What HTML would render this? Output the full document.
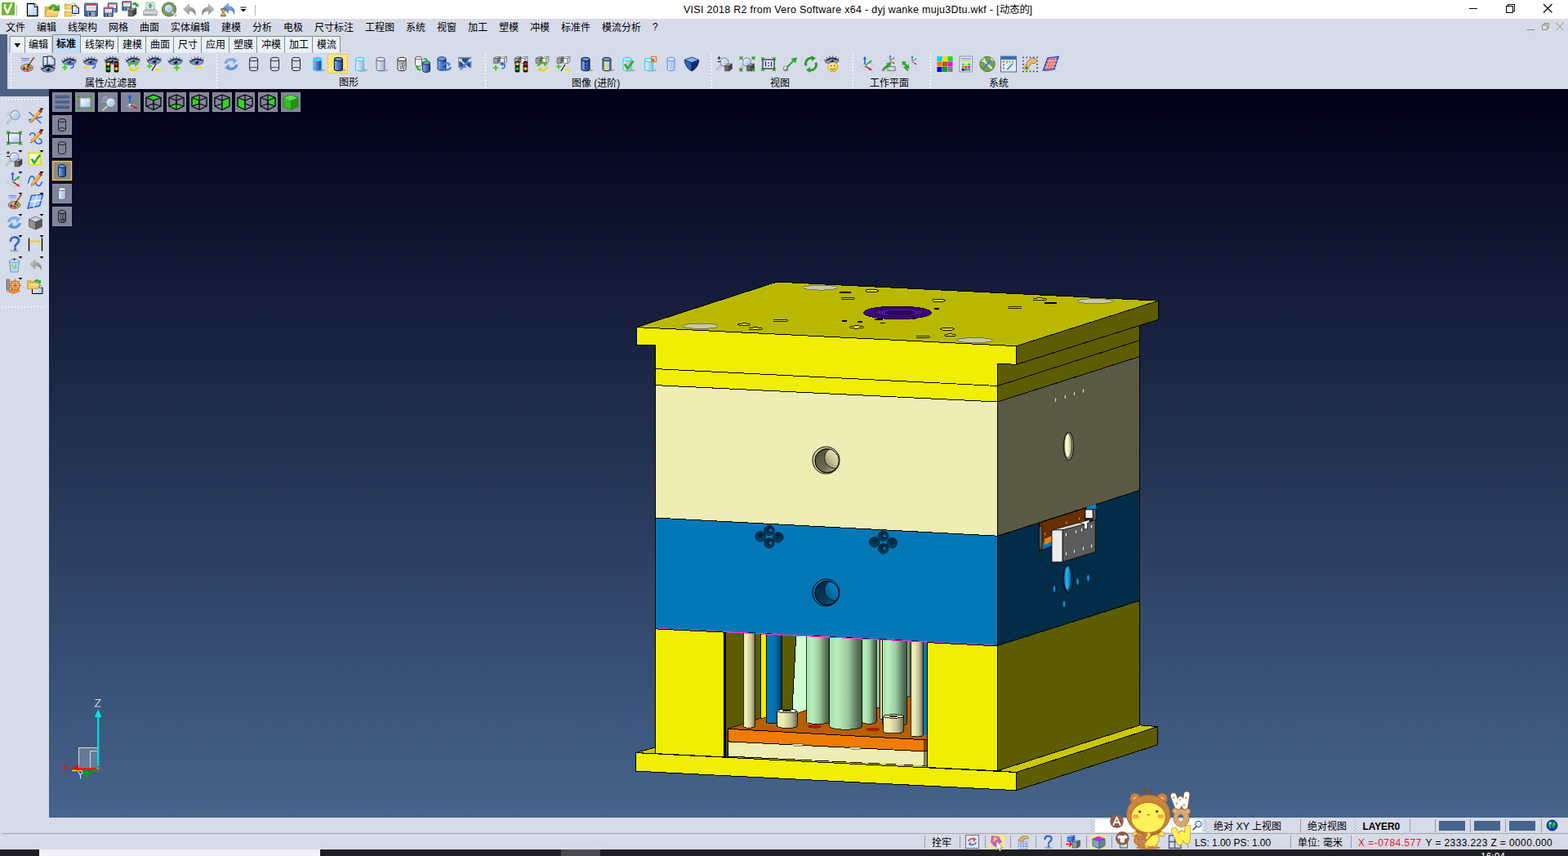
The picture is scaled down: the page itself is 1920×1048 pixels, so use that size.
<!DOCTYPE html>
<html lang="zh"><head><meta charset="utf-8"><title>VISI 2018 R2 from Vero Software x64 - dyj wanke muju3Dtu.wkf</title>
<style>
html,body{margin:0;padding:0;}
body{width:1920px;height:1048px;position:relative;overflow:hidden;background:#d6dbe9;font-family:"Liberation Sans",sans-serif;font-size:12px;}
.t{position:absolute;overflow:visible;display:block;}
.t text{font-family:"Liberation Sans","Noto Sans CJK SC",sans-serif;}
.l{position:absolute;white-space:pre;line-height:1;}
.i{position:absolute;overflow:visible;display:block;}
.abs{position:absolute;}
</style></head><body>
<div style="position:absolute;left:0px;top:0px;width:1920px;height:23px;background:#ffffff;"></div>
<span class="l" style="left:837px;top:5.5px;font-size:12.5px;color:#000;letter-spacing:0.28px;">VISI 2018 R2 from Vero Software x64 - dyj wanke muju3Dtu.wkf - [</span>
<svg class="t" aria-label="动态的" style="left:1224.3px;top:4.7px;" width="38.9" height="16.0" viewBox="0 0 38.9 16.0"><text x="0" y="10.82" font-size="12.3" fill="#000">动态的</text></svg>
<span class="l" style="left:1260.5px;top:5.5px;font-size:12.5px;color:#000;">]</span>
<svg class="i" style="left:1790px;top:0" width="130" height="23" viewBox="0 0 130 23" shape-rendering="crispEdges"><path d="M9 10.5h10" stroke="#000" stroke-width="1" fill="none"/><path d="M54.5 7.5h8v8h-8z M56.5 7.5v-2h8v8h-2" stroke="#000" stroke-width="1" fill="none"/></svg>
<svg class="i" style="left:1889px;top:4px" width="13" height="13" viewBox="0 0 13 13"><path d="M1 1l10.5 10.5M11.5 1L1 11.5" stroke="#000" stroke-width="1.1" fill="none"/></svg>
<div style="position:absolute;left:0px;top:23px;width:1920px;height:20px;background:#d6dbe9;"></div>
<svg class="t" aria-label="文件" style="left:7px;top:26.5px;" width="26.0" height="15.6" viewBox="0 0 26.0 15.6"><text x="0" y="10.56" font-size="12" fill="#000">文件</text></svg>
<svg class="t" aria-label="编辑" style="left:45px;top:26.5px;" width="26.0" height="15.6" viewBox="0 0 26.0 15.6"><text x="0" y="10.56" font-size="12" fill="#000">编辑</text></svg>
<svg class="t" aria-label="线架构" style="left:83px;top:26.5px;" width="38.0" height="15.6" viewBox="0 0 38.0 15.6"><text x="0" y="10.56" font-size="12" fill="#000">线架构</text></svg>
<svg class="t" aria-label="网格" style="left:133px;top:26.5px;" width="26.0" height="15.6" viewBox="0 0 26.0 15.6"><text x="0" y="10.56" font-size="12" fill="#000">网格</text></svg>
<svg class="t" aria-label="曲面" style="left:171px;top:26.5px;" width="26.0" height="15.6" viewBox="0 0 26.0 15.6"><text x="0" y="10.56" font-size="12" fill="#000">曲面</text></svg>
<svg class="t" aria-label="实体编辑" style="left:209px;top:26.5px;" width="50.0" height="15.6" viewBox="0 0 50.0 15.6"><text x="0" y="10.56" font-size="12" fill="#000">实体编辑</text></svg>
<svg class="t" aria-label="建模" style="left:271px;top:26.5px;" width="26.0" height="15.6" viewBox="0 0 26.0 15.6"><text x="0" y="10.56" font-size="12" fill="#000">建模</text></svg>
<svg class="t" aria-label="分析" style="left:309px;top:26.5px;" width="26.0" height="15.6" viewBox="0 0 26.0 15.6"><text x="0" y="10.56" font-size="12" fill="#000">分析</text></svg>
<svg class="t" aria-label="电极" style="left:347px;top:26.5px;" width="26.0" height="15.6" viewBox="0 0 26.0 15.6"><text x="0" y="10.56" font-size="12" fill="#000">电极</text></svg>
<svg class="t" aria-label="尺寸标注" style="left:385px;top:26.5px;" width="50.0" height="15.6" viewBox="0 0 50.0 15.6"><text x="0" y="10.56" font-size="12" fill="#000">尺寸标注</text></svg>
<svg class="t" aria-label="工程图" style="left:447px;top:26.5px;" width="38.0" height="15.6" viewBox="0 0 38.0 15.6"><text x="0" y="10.56" font-size="12" fill="#000">工程图</text></svg>
<svg class="t" aria-label="系统" style="left:497px;top:26.5px;" width="26.0" height="15.6" viewBox="0 0 26.0 15.6"><text x="0" y="10.56" font-size="12" fill="#000">系统</text></svg>
<svg class="t" aria-label="视窗" style="left:535px;top:26.5px;" width="26.0" height="15.6" viewBox="0 0 26.0 15.6"><text x="0" y="10.56" font-size="12" fill="#000">视窗</text></svg>
<svg class="t" aria-label="加工" style="left:573px;top:26.5px;" width="26.0" height="15.6" viewBox="0 0 26.0 15.6"><text x="0" y="10.56" font-size="12" fill="#000">加工</text></svg>
<svg class="t" aria-label="塑模" style="left:611px;top:26.5px;" width="26.0" height="15.6" viewBox="0 0 26.0 15.6"><text x="0" y="10.56" font-size="12" fill="#000">塑模</text></svg>
<svg class="t" aria-label="冲模" style="left:649px;top:26.5px;" width="26.0" height="15.6" viewBox="0 0 26.0 15.6"><text x="0" y="10.56" font-size="12" fill="#000">冲模</text></svg>
<svg class="t" aria-label="标准件" style="left:687px;top:26.5px;" width="38.0" height="15.6" viewBox="0 0 38.0 15.6"><text x="0" y="10.56" font-size="12" fill="#000">标准件</text></svg>
<svg class="t" aria-label="模流分析" style="left:737px;top:26.5px;" width="50.0" height="15.6" viewBox="0 0 50.0 15.6"><text x="0" y="10.56" font-size="12" fill="#000">模流分析</text></svg>
<span class="l" style="left:799px;top:27px;font-size:12px;color:#000;">?</span>
<svg class="i" style="left:1868px;top:26px" width="50" height="14" viewBox="0 0 50 14"><path d="M2 10.5h9" stroke="#918c76" stroke-width="1" fill="none"/><path d="M20.500 4.5h6v6h-6z M22.5 4.500v-2h6v6h-2" stroke="#918c76" stroke-width="1" fill="none"/><path d="M37.500 2l9 9M46.500 2l-9 9" stroke="#918c76" stroke-width="1" fill="none"/></svg>
<div style="position:absolute;left:0px;top:43px;width:1920px;height:66px;background:#d6dbe9;"></div>
<div style="position:absolute;left:0px;top:42px;width:9px;height:76px;background:#4d6082;"></div>
<div style="position:absolute;left:0px;top:109px;width:60px;height:9px;background:#4d6082;"></div>
<svg class="i" style="left:0;top:40px" width="430" height="26" viewBox="0 40 430 26"><path d="M12.0 64.5V44.5H30.5V64.5" fill="#e9f1fc" stroke="#8d8b73" stroke-width="1"/><path d="M30.5 64.5V44.5H64.0V64.5" fill="#e9f1fc" stroke="#8d8b73" stroke-width="1"/><path d="M98.5 64.5V44.5H144.5V64.5" fill="#e9f1fc" stroke="#8d8b73" stroke-width="1"/><path d="M144.5 64.5V44.5H178.5V64.5" fill="#e9f1fc" stroke="#8d8b73" stroke-width="1"/><path d="M178.5 64.5V44.5H212.5V64.5" fill="#e9f1fc" stroke="#8d8b73" stroke-width="1"/><path d="M212.5 64.5V44.5H246.5V64.5" fill="#e9f1fc" stroke="#8d8b73" stroke-width="1"/><path d="M246.5 64.5V44.5H280.5V64.5" fill="#e9f1fc" stroke="#8d8b73" stroke-width="1"/><path d="M280.5 64.5V44.5H314.5V64.5" fill="#e9f1fc" stroke="#8d8b73" stroke-width="1"/><path d="M314.5 64.5V44.5H348.5V64.5" fill="#e9f1fc" stroke="#8d8b73" stroke-width="1"/><path d="M348.5 64.5V44.5H382.5V64.5" fill="#e9f1fc" stroke="#8d8b73" stroke-width="1"/><path d="M382.5 64.5V44.5H416.5V64.5" fill="#e9f1fc" stroke="#8d8b73" stroke-width="1"/><path d="M64.5 64.5V42.5H98.5V64.5" fill="#c4dcf6" stroke="#8d8b73" stroke-width="1"/><path d="M17.500 53h7.500l-3.750 5.200z" fill="#000"/></svg>
<svg class="t" aria-label="编辑" style="left:35.25px;top:47.8px;" width="26.0" height="15.6" viewBox="0 0 26.0 15.6"><text x="0" y="10.56" font-size="12" fill="#000">编辑</text></svg>
<svg class="t" aria-label="标准" style="left:69.45px;top:46.6px;" width="26.0" height="15.6" viewBox="0 0 26.0 15.6"><text x="0" y="10.56" font-size="12" font-weight="bold" fill="#000">标准</text></svg>
<svg class="t" aria-label="线架构" style="left:103.5px;top:47.8px;" width="38.0" height="15.6" viewBox="0 0 38.0 15.6"><text x="0" y="10.56" font-size="12" fill="#000">线架构</text></svg>
<svg class="t" aria-label="建模" style="left:149.5px;top:47.8px;" width="26.0" height="15.6" viewBox="0 0 26.0 15.6"><text x="0" y="10.56" font-size="12" fill="#000">建模</text></svg>
<svg class="t" aria-label="曲面" style="left:183.5px;top:47.8px;" width="26.0" height="15.6" viewBox="0 0 26.0 15.6"><text x="0" y="10.56" font-size="12" fill="#000">曲面</text></svg>
<svg class="t" aria-label="尺寸" style="left:217.5px;top:47.8px;" width="26.0" height="15.6" viewBox="0 0 26.0 15.6"><text x="0" y="10.56" font-size="12" fill="#000">尺寸</text></svg>
<svg class="t" aria-label="应用" style="left:251.5px;top:47.8px;" width="26.0" height="15.6" viewBox="0 0 26.0 15.6"><text x="0" y="10.56" font-size="12" fill="#000">应用</text></svg>
<svg class="t" aria-label="塑膜" style="left:285.5px;top:47.8px;" width="26.0" height="15.6" viewBox="0 0 26.0 15.6"><text x="0" y="10.56" font-size="12" fill="#000">塑膜</text></svg>
<svg class="t" aria-label="冲模" style="left:319.5px;top:47.8px;" width="26.0" height="15.6" viewBox="0 0 26.0 15.6"><text x="0" y="10.56" font-size="12" fill="#000">冲模</text></svg>
<svg class="t" aria-label="加工" style="left:353.5px;top:47.8px;" width="26.0" height="15.6" viewBox="0 0 26.0 15.6"><text x="0" y="10.56" font-size="12" fill="#000">加工</text></svg>
<svg class="t" aria-label="模流" style="left:387.5px;top:47.8px;" width="26.0" height="15.6" viewBox="0 0 26.0 15.6"><text x="0" y="10.56" font-size="12" fill="#000">模流</text></svg>
<svg class="i" style="left:12px;top:66px" width="3" height="41" shape-rendering="crispEdges"><rect x="0" y="0" width="2" height="2" fill="#ffffff"/><rect x="0.0" y="1" width="1" height="1" fill="#b8bdd0"/><rect x="0" y="4" width="2" height="2" fill="#ffffff"/><rect x="0.0" y="5" width="1" height="1" fill="#b8bdd0"/><rect x="0" y="8" width="2" height="2" fill="#ffffff"/><rect x="0.0" y="9" width="1" height="1" fill="#b8bdd0"/><rect x="0" y="12" width="2" height="2" fill="#ffffff"/><rect x="0.0" y="13" width="1" height="1" fill="#b8bdd0"/><rect x="0" y="16" width="2" height="2" fill="#ffffff"/><rect x="0.0" y="17" width="1" height="1" fill="#b8bdd0"/><rect x="0" y="20" width="2" height="2" fill="#ffffff"/><rect x="0.0" y="21" width="1" height="1" fill="#b8bdd0"/><rect x="0" y="24" width="2" height="2" fill="#ffffff"/><rect x="0.0" y="25" width="1" height="1" fill="#b8bdd0"/><rect x="0" y="28" width="2" height="2" fill="#ffffff"/><rect x="0.0" y="29" width="1" height="1" fill="#b8bdd0"/><rect x="0" y="32" width="2" height="2" fill="#ffffff"/><rect x="0.0" y="33" width="1" height="1" fill="#b8bdd0"/><rect x="0" y="36" width="2" height="2" fill="#ffffff"/><rect x="0.0" y="37" width="1" height="1" fill="#b8bdd0"/><rect x="0" y="40" width="2" height="2" fill="#ffffff"/><rect x="0.0" y="41" width="1" height="1" fill="#b8bdd0"/></svg>
<svg class="i" style="left:264px;top:66px" width="3" height="41" shape-rendering="crispEdges"><rect x="0" y="0" width="2" height="2" fill="#ffffff"/><rect x="0.0" y="1" width="1" height="1" fill="#b8bdd0"/><rect x="0" y="4" width="2" height="2" fill="#ffffff"/><rect x="0.0" y="5" width="1" height="1" fill="#b8bdd0"/><rect x="0" y="8" width="2" height="2" fill="#ffffff"/><rect x="0.0" y="9" width="1" height="1" fill="#b8bdd0"/><rect x="0" y="12" width="2" height="2" fill="#ffffff"/><rect x="0.0" y="13" width="1" height="1" fill="#b8bdd0"/><rect x="0" y="16" width="2" height="2" fill="#ffffff"/><rect x="0.0" y="17" width="1" height="1" fill="#b8bdd0"/><rect x="0" y="20" width="2" height="2" fill="#ffffff"/><rect x="0.0" y="21" width="1" height="1" fill="#b8bdd0"/><rect x="0" y="24" width="2" height="2" fill="#ffffff"/><rect x="0.0" y="25" width="1" height="1" fill="#b8bdd0"/><rect x="0" y="28" width="2" height="2" fill="#ffffff"/><rect x="0.0" y="29" width="1" height="1" fill="#b8bdd0"/><rect x="0" y="32" width="2" height="2" fill="#ffffff"/><rect x="0.0" y="33" width="1" height="1" fill="#b8bdd0"/><rect x="0" y="36" width="2" height="2" fill="#ffffff"/><rect x="0.0" y="37" width="1" height="1" fill="#b8bdd0"/><rect x="0" y="40" width="2" height="2" fill="#ffffff"/><rect x="0.0" y="41" width="1" height="1" fill="#b8bdd0"/></svg>
<svg class="i" style="left:593px;top:66px" width="3" height="41" shape-rendering="crispEdges"><rect x="0" y="0" width="2" height="2" fill="#ffffff"/><rect x="0.0" y="1" width="1" height="1" fill="#b8bdd0"/><rect x="0" y="4" width="2" height="2" fill="#ffffff"/><rect x="0.0" y="5" width="1" height="1" fill="#b8bdd0"/><rect x="0" y="8" width="2" height="2" fill="#ffffff"/><rect x="0.0" y="9" width="1" height="1" fill="#b8bdd0"/><rect x="0" y="12" width="2" height="2" fill="#ffffff"/><rect x="0.0" y="13" width="1" height="1" fill="#b8bdd0"/><rect x="0" y="16" width="2" height="2" fill="#ffffff"/><rect x="0.0" y="17" width="1" height="1" fill="#b8bdd0"/><rect x="0" y="20" width="2" height="2" fill="#ffffff"/><rect x="0.0" y="21" width="1" height="1" fill="#b8bdd0"/><rect x="0" y="24" width="2" height="2" fill="#ffffff"/><rect x="0.0" y="25" width="1" height="1" fill="#b8bdd0"/><rect x="0" y="28" width="2" height="2" fill="#ffffff"/><rect x="0.0" y="29" width="1" height="1" fill="#b8bdd0"/><rect x="0" y="32" width="2" height="2" fill="#ffffff"/><rect x="0.0" y="33" width="1" height="1" fill="#b8bdd0"/><rect x="0" y="36" width="2" height="2" fill="#ffffff"/><rect x="0.0" y="37" width="1" height="1" fill="#b8bdd0"/><rect x="0" y="40" width="2" height="2" fill="#ffffff"/><rect x="0.0" y="41" width="1" height="1" fill="#b8bdd0"/></svg>
<svg class="i" style="left:870px;top:66px" width="3" height="41" shape-rendering="crispEdges"><rect x="0" y="0" width="2" height="2" fill="#ffffff"/><rect x="0.0" y="1" width="1" height="1" fill="#b8bdd0"/><rect x="0" y="4" width="2" height="2" fill="#ffffff"/><rect x="0.0" y="5" width="1" height="1" fill="#b8bdd0"/><rect x="0" y="8" width="2" height="2" fill="#ffffff"/><rect x="0.0" y="9" width="1" height="1" fill="#b8bdd0"/><rect x="0" y="12" width="2" height="2" fill="#ffffff"/><rect x="0.0" y="13" width="1" height="1" fill="#b8bdd0"/><rect x="0" y="16" width="2" height="2" fill="#ffffff"/><rect x="0.0" y="17" width="1" height="1" fill="#b8bdd0"/><rect x="0" y="20" width="2" height="2" fill="#ffffff"/><rect x="0.0" y="21" width="1" height="1" fill="#b8bdd0"/><rect x="0" y="24" width="2" height="2" fill="#ffffff"/><rect x="0.0" y="25" width="1" height="1" fill="#b8bdd0"/><rect x="0" y="28" width="2" height="2" fill="#ffffff"/><rect x="0.0" y="29" width="1" height="1" fill="#b8bdd0"/><rect x="0" y="32" width="2" height="2" fill="#ffffff"/><rect x="0.0" y="33" width="1" height="1" fill="#b8bdd0"/><rect x="0" y="36" width="2" height="2" fill="#ffffff"/><rect x="0.0" y="37" width="1" height="1" fill="#b8bdd0"/><rect x="0" y="40" width="2" height="2" fill="#ffffff"/><rect x="0.0" y="41" width="1" height="1" fill="#b8bdd0"/></svg>
<svg class="i" style="left:1043px;top:66px" width="3" height="41" shape-rendering="crispEdges"><rect x="0" y="0" width="2" height="2" fill="#ffffff"/><rect x="0.0" y="1" width="1" height="1" fill="#b8bdd0"/><rect x="0" y="4" width="2" height="2" fill="#ffffff"/><rect x="0.0" y="5" width="1" height="1" fill="#b8bdd0"/><rect x="0" y="8" width="2" height="2" fill="#ffffff"/><rect x="0.0" y="9" width="1" height="1" fill="#b8bdd0"/><rect x="0" y="12" width="2" height="2" fill="#ffffff"/><rect x="0.0" y="13" width="1" height="1" fill="#b8bdd0"/><rect x="0" y="16" width="2" height="2" fill="#ffffff"/><rect x="0.0" y="17" width="1" height="1" fill="#b8bdd0"/><rect x="0" y="20" width="2" height="2" fill="#ffffff"/><rect x="0.0" y="21" width="1" height="1" fill="#b8bdd0"/><rect x="0" y="24" width="2" height="2" fill="#ffffff"/><rect x="0.0" y="25" width="1" height="1" fill="#b8bdd0"/><rect x="0" y="28" width="2" height="2" fill="#ffffff"/><rect x="0.0" y="29" width="1" height="1" fill="#b8bdd0"/><rect x="0" y="32" width="2" height="2" fill="#ffffff"/><rect x="0.0" y="33" width="1" height="1" fill="#b8bdd0"/><rect x="0" y="36" width="2" height="2" fill="#ffffff"/><rect x="0.0" y="37" width="1" height="1" fill="#b8bdd0"/><rect x="0" y="40" width="2" height="2" fill="#ffffff"/><rect x="0.0" y="41" width="1" height="1" fill="#b8bdd0"/></svg>
<svg class="i" style="left:1138px;top:66px" width="3" height="41" shape-rendering="crispEdges"><rect x="0" y="0" width="2" height="2" fill="#ffffff"/><rect x="0.0" y="1" width="1" height="1" fill="#b8bdd0"/><rect x="0" y="4" width="2" height="2" fill="#ffffff"/><rect x="0.0" y="5" width="1" height="1" fill="#b8bdd0"/><rect x="0" y="8" width="2" height="2" fill="#ffffff"/><rect x="0.0" y="9" width="1" height="1" fill="#b8bdd0"/><rect x="0" y="12" width="2" height="2" fill="#ffffff"/><rect x="0.0" y="13" width="1" height="1" fill="#b8bdd0"/><rect x="0" y="16" width="2" height="2" fill="#ffffff"/><rect x="0.0" y="17" width="1" height="1" fill="#b8bdd0"/><rect x="0" y="20" width="2" height="2" fill="#ffffff"/><rect x="0.0" y="21" width="1" height="1" fill="#b8bdd0"/><rect x="0" y="24" width="2" height="2" fill="#ffffff"/><rect x="0.0" y="25" width="1" height="1" fill="#b8bdd0"/><rect x="0" y="28" width="2" height="2" fill="#ffffff"/><rect x="0.0" y="29" width="1" height="1" fill="#b8bdd0"/><rect x="0" y="32" width="2" height="2" fill="#ffffff"/><rect x="0.0" y="33" width="1" height="1" fill="#b8bdd0"/><rect x="0" y="36" width="2" height="2" fill="#ffffff"/><rect x="0.0" y="37" width="1" height="1" fill="#b8bdd0"/><rect x="0" y="40" width="2" height="2" fill="#ffffff"/><rect x="0.0" y="41" width="1" height="1" fill="#b8bdd0"/></svg>
<svg class="t" aria-label="属性/过滤器" style="left:104px;top:94.5px;" width="66.7" height="15.6" viewBox="0 0 66.7 15.6"><text x="0" y="10.56" font-size="12" fill="#000">属性/过滤器</text></svg>
<svg class="t" aria-label="图形" style="left:414.5px;top:94.2px;" width="26.0" height="15.6" viewBox="0 0 26.0 15.6"><text x="0" y="10.56" font-size="12" fill="#000">图形</text></svg>
<svg class="t" aria-label="图像 (进阶)" style="left:700px;top:94.5px;" width="61.7" height="15.6" viewBox="0 0 61.7 15.6"><text x="0" y="10.56" font-size="12" fill="#000">图像 (进阶)</text></svg>
<svg class="t" aria-label="视图" style="left:943px;top:94.5px;" width="26.0" height="15.6" viewBox="0 0 26.0 15.6"><text x="0" y="10.56" font-size="12" fill="#000">视图</text></svg>
<svg class="t" aria-label="工作平面" style="left:1064.5px;top:94.5px;" width="50.0" height="15.6" viewBox="0 0 50.0 15.6"><text x="0" y="10.56" font-size="12" fill="#000">工作平面</text></svg>
<svg class="t" aria-label="系统" style="left:1211px;top:94.5px;" width="26.0" height="15.6" viewBox="0 0 26.0 15.6"><text x="0" y="10.56" font-size="12" fill="#000">系统</text></svg>
<div style="position:absolute;left:0px;top:118px;width:60px;height:883px;background:#d6dbe9;"></div>
<svg class="i" style="left:2px;top:121px" width="56" height="3" shape-rendering="crispEdges"><rect x="0" y="0" width="2" height="2" fill="#ffffff"/><rect x="1" y="1" width="1" height="1" fill="#b8bdd0"/><rect x="4" y="0" width="2" height="2" fill="#ffffff"/><rect x="5" y="1" width="1" height="1" fill="#b8bdd0"/><rect x="8" y="0" width="2" height="2" fill="#ffffff"/><rect x="9" y="1" width="1" height="1" fill="#b8bdd0"/><rect x="12" y="0" width="2" height="2" fill="#ffffff"/><rect x="13" y="1" width="1" height="1" fill="#b8bdd0"/><rect x="16" y="0" width="2" height="2" fill="#ffffff"/><rect x="17" y="1" width="1" height="1" fill="#b8bdd0"/><rect x="20" y="0" width="2" height="2" fill="#ffffff"/><rect x="21" y="1" width="1" height="1" fill="#b8bdd0"/><rect x="24" y="0" width="2" height="2" fill="#ffffff"/><rect x="25" y="1" width="1" height="1" fill="#b8bdd0"/><rect x="28" y="0" width="2" height="2" fill="#ffffff"/><rect x="29" y="1" width="1" height="1" fill="#b8bdd0"/><rect x="32" y="0" width="2" height="2" fill="#ffffff"/><rect x="33" y="1" width="1" height="1" fill="#b8bdd0"/><rect x="36" y="0" width="2" height="2" fill="#ffffff"/><rect x="37" y="1" width="1" height="1" fill="#b8bdd0"/><rect x="40" y="0" width="2" height="2" fill="#ffffff"/><rect x="41" y="1" width="1" height="1" fill="#b8bdd0"/><rect x="44" y="0" width="2" height="2" fill="#ffffff"/><rect x="45" y="1" width="1" height="1" fill="#b8bdd0"/><rect x="48" y="0" width="2" height="2" fill="#ffffff"/><rect x="49" y="1" width="1" height="1" fill="#b8bdd0"/><rect x="52" y="0" width="2" height="2" fill="#ffffff"/><rect x="53" y="1" width="1" height="1" fill="#b8bdd0"/></svg>
<svg class="i" style="left:2px;top:375px" width="56" height="3" shape-rendering="crispEdges"><rect x="0" y="0" width="2" height="2" fill="#ffffff"/><rect x="1" y="1" width="1" height="1" fill="#b8bdd0"/><rect x="4" y="0" width="2" height="2" fill="#ffffff"/><rect x="5" y="1" width="1" height="1" fill="#b8bdd0"/><rect x="8" y="0" width="2" height="2" fill="#ffffff"/><rect x="9" y="1" width="1" height="1" fill="#b8bdd0"/><rect x="12" y="0" width="2" height="2" fill="#ffffff"/><rect x="13" y="1" width="1" height="1" fill="#b8bdd0"/><rect x="16" y="0" width="2" height="2" fill="#ffffff"/><rect x="17" y="1" width="1" height="1" fill="#b8bdd0"/><rect x="20" y="0" width="2" height="2" fill="#ffffff"/><rect x="21" y="1" width="1" height="1" fill="#b8bdd0"/><rect x="24" y="0" width="2" height="2" fill="#ffffff"/><rect x="25" y="1" width="1" height="1" fill="#b8bdd0"/><rect x="28" y="0" width="2" height="2" fill="#ffffff"/><rect x="29" y="1" width="1" height="1" fill="#b8bdd0"/><rect x="32" y="0" width="2" height="2" fill="#ffffff"/><rect x="33" y="1" width="1" height="1" fill="#b8bdd0"/><rect x="36" y="0" width="2" height="2" fill="#ffffff"/><rect x="37" y="1" width="1" height="1" fill="#b8bdd0"/><rect x="40" y="0" width="2" height="2" fill="#ffffff"/><rect x="41" y="1" width="1" height="1" fill="#b8bdd0"/><rect x="44" y="0" width="2" height="2" fill="#ffffff"/><rect x="45" y="1" width="1" height="1" fill="#b8bdd0"/><rect x="48" y="0" width="2" height="2" fill="#ffffff"/><rect x="49" y="1" width="1" height="1" fill="#b8bdd0"/><rect x="52" y="0" width="2" height="2" fill="#ffffff"/><rect x="53" y="1" width="1" height="1" fill="#b8bdd0"/></svg>
<div style="position:absolute;left:60px;top:109px;width:1860px;height:892px;background:linear-gradient(#000018,#46648c);"></div>
<div style="position:absolute;left:0px;top:1001px;width:1920px;height:39px;background:#d6dbe9;"></div>
<div style="position:absolute;left:2px;top:1020px;width:1918px;height:1px;background:#a6a6a6;"></div>
<div style="position:absolute;left:0px;top:1040px;width:1920px;height:8px;background:#1f1f1f;"></div>
<div style="position:absolute;left:48px;top:1040px;width:344px;height:8px;background:#f2f2f2;"></div>
<div style="position:absolute;left:687px;top:1040px;width:48px;height:8px;background:#4a4a4a;"></div>
<span class="l" style="left:1813px;top:1043px;font-size:12px;color:#fff;">16:04</span>
<svg class="i" style="left:0;top:0" width="1920" height="109" viewBox="0 0 1920 109"><defs><linearGradient id="gdoc" x1="0" y1="0" x2="1" y2="1"><stop offset="0" stop-color="#ffffff"/><stop offset="1" stop-color="#a8c4f4"/></linearGradient><linearGradient id="gfold" x1="0" y1="0" x2="0" y2="1"><stop offset="0" stop-color="#fbe49a"/><stop offset="1" stop-color="#f2c04c"/></linearGradient><linearGradient id="gflop" x1="0" y1="0" x2="0" y2="1"><stop offset="0" stop-color="#5a7cc0"/><stop offset="1" stop-color="#3a5898"/></linearGradient><linearGradient id="gcb" x1="0" y1="0" x2="1" y2="0"><stop offset="0" stop-color="#8fb4ec"/><stop offset="0.35" stop-color="#5a88d8"/><stop offset="1" stop-color="#1c3888"/></linearGradient><linearGradient id="gcl" x1="0" y1="0" x2="1" y2="0"><stop offset="0" stop-color="#e8eefc"/><stop offset="0.5" stop-color="#c4d2ee"/><stop offset="1" stop-color="#a0b0d4"/></linearGradient><linearGradient id="ggray" x1="0" y1="0" x2="1" y2="1"><stop offset="0" stop-color="#d8d8d8"/><stop offset="1" stop-color="#707070"/></linearGradient><radialGradient id="giris" cx="0.5" cy="0.5" r="0.5"><stop offset="0" stop-color="#0a1430"/><stop offset="0.35" stop-color="#1c3470"/><stop offset="1" stop-color="#7c98cc"/></radialGradient><radialGradient id="gball" cx="0.35" cy="0.3" r="0.8"><stop offset="0" stop-color="#ffffff"/><stop offset="0.5" stop-color="#b0b0b0"/><stop offset="1" stop-color="#505050"/></radialGradient><radialGradient id="gsmile" cx="0.4" cy="0.35" r="0.8"><stop offset="0" stop-color="#fff8a0"/><stop offset="0.6" stop-color="#ffd840"/><stop offset="1" stop-color="#d89000"/></radialGradient><linearGradient id="glens" x1="0" y1="0" x2="1" y2="1"><stop offset="0" stop-color="#f4faff"/><stop offset="1" stop-color="#8cb4e8"/></linearGradient><linearGradient id="ggreen" x1="0" y1="0" x2="0" y2="1"><stop offset="0" stop-color="#58d040"/><stop offset="1" stop-color="#1c8c1c"/></linearGradient><linearGradient id="gbluearrow" x1="0" y1="0" x2="0" y2="1"><stop offset="0" stop-color="#8cbcf0"/><stop offset="1" stop-color="#3c74c0"/></linearGradient><linearGradient id="ggem" x1="0" y1="0" x2="1" y2="1"><stop offset="0" stop-color="#6c9cf0"/><stop offset="1" stop-color="#0c2060"/></linearGradient></defs><rect x="2" y="3" width="16" height="15.600" fill="#6cb42c"/><path d="M5.500 8.500l3.600 7.500l4.800-10.500" fill="none" stroke="#fff" stroke-width="2.600" stroke-linejoin="round" stroke-linecap="round"/><circle cx="6.200" cy="6.200" r="1.300" fill="#fff"/><rect x="20" y="6" width="1" height="13" fill="#b4b4b4"/><path d="M33.5 4.5h8.5l4.0 4.0v11.0h-12.5z" fill="url(#gdoc)" stroke="#000" stroke-width="1.3"/><path d="M42.0 4.5v4.0h4.0" fill="#fff" stroke="#000" stroke-width="0.9099999999999999"/><g transform="translate(55,5.5) scale(1.0)"><path d="M0 3h5l1.500 1.500h8.500v10h-15z" fill="#e8b840" stroke="#b08820" stroke-width="0.500"/><path d="M0 15l2.500-8.500h15l-2.500 8.500z" fill="url(#gfold)" stroke="#b88c24" stroke-width="0.500"/></g><path d="M60 10c1-5 7-6 10-2l2.500-2v7h-7l2.500-2.400c-2-2.500-5-2-6 1z" fill="url(#ggreen)" stroke="#187818" stroke-width="0.500"/><g transform="translate(79,3) scale(0.55)"><path d="M0 3h5l1.500 1.500h8.500v10h-15z" fill="#e8b840" stroke="#b08820" stroke-width="0.500"/><path d="M0 15l2.500-8.500h15l-2.500 8.500z" fill="url(#gfold)" stroke="#b88c24" stroke-width="0.500"/></g><g transform="translate(79,12) scale(0.55)"><path d="M0 3h5l1.500 1.500h8.500v10h-15z" fill="#e8b840" stroke="#b08820" stroke-width="0.500"/><path d="M0 15l2.500-8.500h15l-2.500 8.500z" fill="url(#gfold)" stroke="#b88c24" stroke-width="0.500"/></g><path d="M87 4h5v15h-5" fill="none" stroke="#58c858" stroke-width="0.900"/><path d="M88.5 7h5.4399999999999995l2.56 2.56v6.9399999999999995h-8z" fill="url(#gdoc)" stroke="#000" stroke-width="0.9"/><path d="M93.94 7v2.56h2.56" fill="#fff" stroke="#000" stroke-width="0.63"/><g transform="translate(103.5,4) scale(1.0)"><rect x="0" y="0" width="16" height="16" rx="1.200" fill="url(#gflop)" stroke="#2c4480" stroke-width="0.800"/><rect x="2.200" y="1" width="11.600" height="8" fill="#f8f8f8"/><rect x="2.200" y="1" width="11.600" height="1.800" fill="#e03828"/><path d="M3.500 4.500h9M3.500 6h9M3.500 7.500h9" stroke="#b8b8b8" stroke-width="0.600"/><rect x="4" y="10.500" width="9" height="5.500" fill="#a0a4b0"/><rect x="5.500" y="11.200" width="2.200" height="4" fill="#20305c"/></g><g transform="translate(132,3.5) scale(0.72)"><rect x="0" y="0" width="16" height="16" rx="1.200" fill="url(#gflop)" stroke="#2c4480" stroke-width="0.800"/><rect x="2.200" y="1" width="11.600" height="8" fill="#f8f8f8"/><rect x="2.200" y="1" width="11.600" height="1.800" fill="#e03828"/><path d="M3.500 4.500h9M3.500 6h9M3.500 7.500h9" stroke="#b8b8b8" stroke-width="0.600"/><rect x="4" y="10.500" width="9" height="5.500" fill="#a0a4b0"/><rect x="5.500" y="11.200" width="2.200" height="4" fill="#20305c"/></g><g transform="translate(127,9) scale(0.72)"><rect x="0" y="0" width="16" height="16" rx="1.200" fill="url(#gflop)" stroke="#2c4480" stroke-width="0.800"/><rect x="2.200" y="1" width="11.600" height="8" fill="#f8f8f8"/><rect x="2.200" y="1" width="11.600" height="1.800" fill="#e03828"/><path d="M3.500 4.500h9M3.500 6h9M3.500 7.500h9" stroke="#b8b8b8" stroke-width="0.600"/><rect x="4" y="10.500" width="9" height="5.500" fill="#a0a4b0"/><rect x="5.500" y="11.200" width="2.200" height="4" fill="#20305c"/></g><g transform="translate(149.5,1.5) scale(0.72)"><rect x="0" y="0" width="16" height="16" rx="1.200" fill="url(#gflop)" stroke="#2c4480" stroke-width="0.800"/><rect x="2.200" y="1" width="11.600" height="8" fill="#f8f8f8"/><rect x="2.200" y="1" width="11.600" height="1.800" fill="#e03828"/><path d="M3.500 4.500h9M3.500 6h9M3.500 7.500h9" stroke="#b8b8b8" stroke-width="0.600"/><rect x="4" y="10.500" width="9" height="5.500" fill="#a0a4b0"/><rect x="5.500" y="11.200" width="2.200" height="4" fill="#20305c"/></g><g transform="translate(157,10) scale(1.0)"><path d="M0 3l4-3h6l-4 3z" fill="#a8a8a8" stroke="#303030" stroke-width="0.500"/><path d="M0 3h6v7h-6z" fill="#686868" stroke="#303030" stroke-width="0.500"/><path d="M6 3l4-3v7l-4 3z" fill="#404040" stroke="#303030" stroke-width="0.500"/></g><path d="M162 5c1-3 5-3 6 0l1.500-1v4.500h-4.500l1.500-1.500c-1-1.500-2.500-1.500-3 0z" fill="#30b030"/><path d="M177 13l2.500-5h9l2.500 5z" fill="#e8e8e8" stroke="#909090" stroke-width="0.500"/><rect x="175.500" y="13" width="17" height="5.500" rx="1" fill="#d8d8d8" stroke="#888" stroke-width="0.600"/><rect x="175.500" y="17" width="17" height="2.500" fill="#a8a8a8"/><rect x="179" y="3" width="10" height="8.500" fill="#d8e8f8" stroke="#7890b0" stroke-width="0.600"/><path d="M184 4l3.200 3.500h-2v2.500h-2.400v-2.500h-2z" fill="#30c030"/><circle cx="207" cy="11.500" r="8.600" fill="#78a048" stroke="#587830" stroke-width="1"/><g transform="translate(197.500,2)"><path d="M12.5 12.0l5 5" stroke="#a0a0a0" stroke-width="2.600" stroke-linecap="round"/><path d="M12.5 12.0l5 5" stroke="#e0e0e0" stroke-width="1.200" stroke-linecap="round"/><circle cx="9" cy="8.5" r="5" fill="url(#glens)" stroke="#8898b0" stroke-width="1.300"/><circle cx="9" cy="8.5" r="3.8" fill="none" stroke="#ffffff" stroke-width="0.600" opacity="0.8"/></g><g transform="translate(223.5,4) scale(1.05)"><path d="M1 7l6.500-6v3.500c5 0 8.500 3.500 7.500 9.500c-1-3.500-3.500-5-7.500-5v4z" fill="url(#ggray)" stroke="#9a9a9a" stroke-width="0.600"/></g><g transform="translate(263.3,4) scale(-1.05,1.05)"><path d="M1 7l6.500-6v3.500c5 0 8.500 3.500 7.500 9.500c-1-3.500-3.500-5-7.500-5v4z" fill="url(#ggray)" stroke="#9a9a9a" stroke-width="0.600"/></g><g transform="translate(272,3) scale(1.0)"><path d="M1 7l6.500-6v3.500c5 0 8.500 3.500 7.500 9.500c-1-3.500-3.500-5-7.500-5v4z" fill="url(#gbluearrow)" stroke="#4878c0" stroke-width="0.600"/></g><path d="M270.500 11h6l-2.200 4.200l2.200 4.300h-6l2.200-4.300z" fill="#c8b070" stroke="#705820" stroke-width="0.700"/><rect x="270" y="10.500" width="7" height="1.200" fill="#806828"/><rect x="270" y="19" width="7" height="1.200" fill="#806828"/><rect x="294.500" y="8.500" width="7" height="1" fill="#000"/><path d="M294.500 11h7l-3.500 3.500z" fill="#000"/><rect x="312" y="6" width="1" height="13" fill="#b4b4b4"/><g transform="translate(23.00,68.50) scale(1.0)"><path d="M2 2.500h10l2 1.500h-10z" fill="#7088e0"/><path d="M2 5h10l2 1.500h-10z" fill="#98a8e8"/><path d="M2 7.500h10l2 1.500h-10z" fill="#c0c8f0"/><ellipse cx="10" cy="14.500" rx="7.500" ry="4.500" fill="#c89870" stroke="#705038" stroke-width="0.700"/><circle cx="6.500" cy="15.500" r="1.600" fill="#1830d0"/><circle cx="10.500" cy="16.500" r="1.600" fill="#e02020"/><circle cx="14" cy="14.500" r="1.600" fill="#20b030"/><circle cx="9" cy="12.500" r="1.200" fill="#f0e020"/><path d="M18.500 2l-6.500 9.500" stroke="#a05020" stroke-width="1.600" stroke-linecap="round"/><path d="M12.500 10.500l-1.500 3" stroke="#503018" stroke-width="1.800" stroke-linecap="round"/></g><g transform="translate(49.00,68.50) scale(1.0)"><path d="M4 1h6.12l2.88 2.88v8.120000000000001h-9z" fill="url(#gdoc)" stroke="#000" stroke-width="0.9"/><path d="M10.120000000000001 1v2.88h2.88" fill="#fff" stroke="#000" stroke-width="0.63"/><path d="M9 0.5h6.12l2.88 2.88v8.120000000000001h-9z" fill="url(#gdoc)" stroke="#000" stroke-width="0.9"/><path d="M15.120000000000001 0.5v2.88h2.88" fill="#fff" stroke="#000" stroke-width="0.63"/><g transform="translate(0,9)"><path d="M0.500 8.500C4 2 15 1 19.500 7C15.500 4.500 5 5 0.500 8.500Z" fill="#1c2238"/><path d="M2 8.500C6 4 14 4 18 8C14 11.800 6 11.800 2 8.500Z" fill="#8c9cc4" stroke="#2c3454" stroke-width="0.600"/><circle cx="10" cy="7.800" r="3.300" fill="url(#giris)"/><circle cx="10" cy="7.800" r="1.500" fill="#060a1c"/><circle cx="9" cy="6.600" r="0.800" fill="#fff" opacity="0.85"/><path d="M1.800 6.300l-1.500-1.600M4.300 4.300l-1-2M7.500 3.200l-0.400-2.200M11 3l0.300-2.200M14.200 3.600l1.100-2M16.800 5l1.700-1.500" stroke="#1c2238" stroke-width="0.800"/></g></g><g transform="translate(75.00,68.50) scale(1.0)"><g transform="translate(0,0)"><path d="M0.500 8.500C4 2 15 1 19.500 7C15.500 4.500 5 5 0.500 8.500Z" fill="#1c2238"/><path d="M2 8.500C6 4 14 4 18 8C14 11.800 6 11.800 2 8.500Z" fill="#8c9cc4" stroke="#2c3454" stroke-width="0.600"/><circle cx="10" cy="7.800" r="3.300" fill="url(#giris)"/><circle cx="10" cy="7.800" r="1.500" fill="#060a1c"/><circle cx="9" cy="6.600" r="0.800" fill="#fff" opacity="0.85"/><path d="M1.800 6.300l-1.500-1.600M4.300 4.300l-1-2M7.500 3.200l-0.400-2.200M11 3l0.300-2.200M14.200 3.600l1.100-2M16.800 5l1.700-1.500" stroke="#1c2238" stroke-width="0.800"/></g><path d="M1.2999999999999998 14h6.4M4.5 10.8v6.4" stroke="#48d020" stroke-width="2"/><path d="M11.5 15c4 0 5-5 1.500-6l-2 0m1.800-2.200l-2.600 2.400l2.800 2" fill="none" stroke="#2c6cd0" stroke-width="1.500"/></g><g transform="translate(101.00,68.50) scale(1.0)"><g transform="translate(0,0)"><path d="M0.500 8.500C4 2 15 1 19.500 7C15.500 4.500 5 5 0.500 8.500Z" fill="#1c2238"/><path d="M2 8.500C6 4 14 4 18 8C14 11.800 6 11.800 2 8.500Z" fill="#8c9cc4" stroke="#2c3454" stroke-width="0.600"/><circle cx="10" cy="7.800" r="3.300" fill="url(#giris)"/><circle cx="10" cy="7.800" r="1.500" fill="#060a1c"/><circle cx="9" cy="6.600" r="0.800" fill="#fff" opacity="0.85"/><path d="M1.800 6.300l-1.500-1.600M4.300 4.300l-1-2M7.500 3.200l-0.400-2.200M11 3l0.300-2.200M14.200 3.600l1.100-2M16.800 5l1.700-1.500" stroke="#1c2238" stroke-width="0.800"/></g><path d="M1.5 14h7.0" stroke="#f0e000" stroke-width="2"/><path d="M12 15c4 0 5-5 1.500-6l-2 0m1.800-2.200l-2.600 2.400l2.800 2" fill="none" stroke="#2c6cd0" stroke-width="1.500"/></g><g transform="translate(127.00,68.50) scale(1.0)"><g transform="translate(0,-1)"><path d="M0.500 8.500C4 2 15 1 19.500 7C15.500 4.500 5 5 0.500 8.500Z" fill="#1c2238"/><path d="M2 8.500C6 4 14 4 18 8C14 11.800 6 11.800 2 8.500Z" fill="#8c9cc4" stroke="#2c3454" stroke-width="0.600"/><circle cx="10" cy="7.800" r="3.300" fill="url(#giris)"/><circle cx="10" cy="7.800" r="1.500" fill="#060a1c"/><circle cx="9" cy="6.600" r="0.800" fill="#fff" opacity="0.85"/><path d="M1.800 6.300l-1.500-1.600M4.300 4.300l-1-2M7.500 3.200l-0.400-2.200M11 3l0.300-2.200M14.200 3.600l1.100-2M16.800 5l1.700-1.500" stroke="#1c2238" stroke-width="0.800"/></g><rect x="2.7" y="6.5" width="5.600" height="13.500" rx="1.500" fill="#0c0c0c"/><circle cx="5.5" cy="9.8" r="2.100" fill="#f0d000"/><circle cx="5.5" cy="15.700000000000001" r="2.100" fill="#10c010"/><rect x="12.7" y="6.5" width="5.600" height="13.500" rx="1.500" fill="#0c0c0c"/><circle cx="15.5" cy="9.8" r="2.100" fill="#e01010"/><circle cx="15.5" cy="15.700000000000001" r="2.100" fill="#f0c000"/></g><g transform="translate(153.00,68.50) scale(1.0)"><g transform="translate(0,-1)"><path d="M0.500 8.500C4 2 15 1 19.500 7C15.500 4.500 5 5 0.500 8.500Z" fill="#1c2238"/><path d="M2 8.500C6 4 14 4 18 8C14 11.800 6 11.800 2 8.500Z" fill="#8c9cc4" stroke="#2c3454" stroke-width="0.600"/><circle cx="10" cy="7.800" r="3.300" fill="url(#giris)"/><circle cx="10" cy="7.800" r="1.500" fill="#060a1c"/><circle cx="9" cy="6.600" r="0.800" fill="#fff" opacity="0.85"/><path d="M1.800 6.300l-1.500-1.600M4.300 4.300l-1-2M7.500 3.200l-0.400-2.200M11 3l0.300-2.200M14.200 3.600l1.100-2M16.800 5l1.700-1.500" stroke="#1c2238" stroke-width="0.800"/></g><path d="M5.0 12.5A5.5 4.4 0 0 1 14.35 9.7" fill="none" stroke="#40b830" stroke-width="2.6"/><path d="M11.6 6.675000000000001l5.225 2.475l-4.125 4.125z" fill="#40b830"/><path d="M16.0 13.5A5.5 4.4 0 0 1 6.65 16.3" fill="none" stroke="#e8d810" stroke-width="2.6"/><path d="M9.4 19.325l-5.225-2.475l4.125-4.125z" fill="#e8d810"/></g><g transform="translate(179.00,68.50) scale(1.0)"><g transform="translate(0,-1)"><path d="M0.500 8.500C4 2 15 1 19.500 7C15.500 4.500 5 5 0.500 8.500Z" fill="#1c2238"/><path d="M2 8.500C6 4 14 4 18 8C14 11.800 6 11.800 2 8.500Z" fill="#8c9cc4" stroke="#2c3454" stroke-width="0.600"/><circle cx="10" cy="7.800" r="3.300" fill="url(#giris)"/><circle cx="10" cy="7.800" r="1.500" fill="#060a1c"/><circle cx="9" cy="6.600" r="0.800" fill="#fff" opacity="0.85"/><path d="M1.800 6.300l-1.500-1.600M4.300 4.300l-1-2M7.500 3.200l-0.400-2.200M11 3l0.300-2.200M14.200 3.600l1.100-2M16.800 5l1.700-1.500" stroke="#1c2238" stroke-width="0.800"/></g><path d="M1 12.5h6M4 9.5v6" stroke="#48d020" stroke-width="2"/><path d="M12 10l-5 8" stroke="#202020" stroke-width="1.300"/><path d="M11.0 16.5h7.0" stroke="#f0e000" stroke-width="2"/></g><g transform="translate(205.00,68.50) scale(1.0)"><g transform="translate(0,0)"><path d="M0.500 8.500C4 2 15 1 19.500 7C15.500 4.500 5 5 0.500 8.500Z" fill="#1c2238"/><path d="M2 8.500C6 4 14 4 18 8C14 11.800 6 11.800 2 8.500Z" fill="#8c9cc4" stroke="#2c3454" stroke-width="0.600"/><circle cx="10" cy="7.800" r="3.300" fill="url(#giris)"/><circle cx="10" cy="7.800" r="1.500" fill="#060a1c"/><circle cx="9" cy="6.600" r="0.800" fill="#fff" opacity="0.85"/><path d="M1.800 6.300l-1.500-1.600M4.300 4.300l-1-2M7.500 3.200l-0.400-2.200M11 3l0.300-2.200M14.200 3.600l1.100-2M16.800 5l1.700-1.500" stroke="#1c2238" stroke-width="0.800"/></g><path d="M7.7 14.5h7.6M11.5 10.7v7.6" stroke="#48d020" stroke-width="2.2"/></g><g transform="translate(231.00,68.50) scale(1.0)"><g transform="translate(0,0)"><path d="M0.500 8.500C4 2 15 1 19.500 7C15.500 4.500 5 5 0.500 8.500Z" fill="#1c2238"/><path d="M2 8.500C6 4 14 4 18 8C14 11.800 6 11.800 2 8.500Z" fill="#8c9cc4" stroke="#2c3454" stroke-width="0.600"/><circle cx="10" cy="7.800" r="3.300" fill="url(#giris)"/><circle cx="10" cy="7.800" r="1.500" fill="#060a1c"/><circle cx="9" cy="6.600" r="0.800" fill="#fff" opacity="0.85"/><path d="M1.800 6.300l-1.500-1.600M4.300 4.300l-1-2M7.500 3.200l-0.400-2.200M11 3l0.300-2.200M14.200 3.600l1.100-2M16.800 5l1.700-1.500" stroke="#1c2238" stroke-width="0.800"/></g><path d="M8.2 14h7.6" stroke="#f0e000" stroke-width="2.2"/></g><g transform="translate(273.00,68.50) scale(1.0)"><path d="M3.2 9.5A6.8 5.44 0 0 1 14.76 5.92" fill="none" stroke="#7eaee8" stroke-width="3.4"/><path d="M11.36 2.1800000000000006l6.46 3.06l-5.1 5.1z" fill="#7eaee8"/><path d="M16.8 10.5A6.8 5.44 0 0 1 5.24 14.08" fill="none" stroke="#5c94dc" stroke-width="3.4"/><path d="M8.64 17.82l-6.46-3.06l5.1-5.1z" fill="#5c94dc"/></g><g transform="translate(300.60,68.50) scale(1.0)"><path d="M5 4V16A5.0 2.2 0 0 0 15 16V4" fill="none" stroke="#202020" stroke-width="1.0"/><path d="M5 16A5.0 2.2 0 0 1 15 16" fill="none" stroke="#202020" stroke-width="0.8"/><ellipse cx="10.0" cy="4" rx="5.0" ry="2.2" fill="none" stroke="#202020" stroke-width="1.0"/></g><g transform="translate(326.50,68.50) scale(1.0)"><path d="M5 4V16A5.0 2.2 0 0 0 15 16V4" fill="none" stroke="#202020" stroke-width="1.0"/><path d="M5 16A5.0 2.2 0 0 1 15 16" fill="none" stroke="#202020" stroke-width="0.8"/><ellipse cx="10.0" cy="4" rx="5.0" ry="2.2" fill="none" stroke="#202020" stroke-width="1.0"/></g><g transform="translate(352.50,68.50) scale(1.0)"><path d="M5 4V16A5.0 2.2 0 0 0 15 16V4" fill="none" stroke="#202020" stroke-width="1.0"/><path d="M5 16A5.0 2.2 0 0 1 15 16" fill="none" stroke="#202020" stroke-width="0.8"/><ellipse cx="10.0" cy="4" rx="5.0" ry="2.2" fill="none" stroke="#202020" stroke-width="1.0"/></g><g transform="translate(378.80,68.50) scale(1.0)"><ellipse cx="13.0" cy="17.5" rx="6.5" ry="1.600" fill="#808898" opacity="0.55"/><path d="M5 4V16A5.0 2.2 0 0 0 15 16V4" fill="url(#gcb)" stroke="#18d8f0" stroke-width="1.2"/><ellipse cx="10.0" cy="4" rx="5.0" ry="2.2" fill="#88b0ec" stroke="#18d8f0" stroke-width="1.2"/></g><rect x="401.500" y="66.500" width="24" height="23" fill="#ffe680" stroke="#f0c850" stroke-width="1"/><g transform="translate(404.40,68.50) scale(1.0)"><ellipse cx="13.0" cy="17.5" rx="6.5" ry="1.600" fill="#808898" opacity="0.55"/><path d="M5 4V16A5.0 2.2 0 0 0 15 16V4" fill="url(#gcb)" stroke="#10183c" stroke-width="1.1"/><ellipse cx="10.0" cy="4" rx="5.0" ry="2.2" fill="#7098d8" stroke="#10183c" stroke-width="1.1"/></g><g transform="translate(430.60,68.50) scale(1.0)"><ellipse cx="13.0" cy="17.5" rx="6.5" ry="1.600" fill="#808898" opacity="0.55"/><path d="M5 4V16A5.0 2.2 0 0 0 15 16V4" fill="url(#gcl)" stroke="#28dcf0" stroke-width="1.2"/><ellipse cx="10.0" cy="4" rx="5.0" ry="2.2" fill="#e0e8f8" stroke="#28dcf0" stroke-width="1.2"/></g><g transform="translate(456.00,68.50) scale(1.0)"><ellipse cx="13.0" cy="17.5" rx="6.5" ry="1.600" fill="#808898" opacity="0.55"/><path d="M5 4V16A5.0 2.2 0 0 0 15 16V4" fill="url(#gcl)" stroke="#586078" stroke-width="1.0"/><ellipse cx="10.0" cy="4" rx="5.0" ry="2.2" fill="#e4e8f4" stroke="#586078" stroke-width="1.0"/></g><g transform="translate(482.00,68.50) scale(1.0)"><path d="M5 4V16A5.0 2.2 0 0 0 15 16V4" fill="#f4f4f4" stroke="#202020" stroke-width="1.0"/><ellipse cx="10.0" cy="4" rx="5.0" ry="2.2" fill="#f4f4f4" stroke="#202020" stroke-width="1.0"/><path d="M7 5.500l1.500 11M9 6l3 11M12 6l-2.500 11M13.500 5.500l-1 11.500M8 10l5-2M7.500 14l6-3" stroke="#303030" stroke-width="0.600" fill="none"/></g><g transform="translate(507.50,68.50) scale(1.0)"><path d="M1 2.5V11A4.0 1.8 0 0 0 9 11V2.5" fill="#f0f0f0" stroke="#404040" stroke-width="0.8"/><ellipse cx="5.0" cy="2.5" rx="4.0" ry="1.8" fill="#f0f0f0" stroke="#404040" stroke-width="0.8"/><path d="M10 8.5V18A4.5 2 0 0 0 19 18V8.5" fill="url(#gcb)" stroke="#10204c" stroke-width="0.9"/><ellipse cx="14.5" cy="8.5" rx="4.5" ry="2" fill="#7ca0e0" stroke="#10204c" stroke-width="0.9"/><path d="M11 3c3-1.500 5 0 5.500 3l1.500-0.500l-2 3.500l-3-2.500l1.500-0.300c-0.500-1.500-1.500-2-3.500-1.500z" fill="#30b030"/><path d="M8 17.500c-3 1-5-0.500-5.500-3l-1.500 0.500l2-3.500l3 2.500l-1.500 0.300c0.500 1.200 1.500 1.800 3.500 1.400z" fill="#30b030"/></g><g transform="translate(534.00,68.50) scale(1.0)"><path d="M2 3.5V15.5A5.0 2.2 0 0 0 12 15.5V3.5" fill="url(#gcb)" stroke="#10204c" stroke-width="0.9"/><ellipse cx="7.0" cy="3.5" rx="5.0" ry="2.2" fill="#7ca0e0" stroke="#10204c" stroke-width="0.9"/><path d="M8.2 12.5A4.8 3.84 0 0 1 16.36 10.120000000000001" fill="none" stroke="#4888e0" stroke-width="2.2"/><path d="M13.96 7.48l4.56 2.16l-3.5999999999999996 3.5999999999999996z" fill="#4888e0"/><path d="M17.8 13.5A4.8 3.84 0 0 1 9.64 15.879999999999999" fill="none" stroke="#3070c8" stroke-width="2.2"/><path d="M12.04 18.52l-4.56-2.16l3.5999999999999996-3.5999999999999996z" fill="#3070c8"/></g><g transform="translate(559.70,68.50) scale(1.0)"><rect x="2" y="2" width="15" height="12" fill="#4068a8" stroke="#808898" stroke-width="1.200"/><rect x="3.500" y="3.500" width="12" height="9" fill="#2c4c88"/><path d="M3 4l13 13" stroke="#d0d4dc" stroke-width="2.200"/><path d="M16 4l-12 13" stroke="#4888d8" stroke-width="2.200"/><path d="M16.500 2.500l2 2l-3.500 3.500l-2-2z" fill="#e0e0e0"/><circle cx="4" cy="5" r="2" fill="#d8dce4"/></g><g transform="translate(602.50,68.50) scale(1.0)"><path d="M2 3l3-2h5l-3 2z" fill="#c8c8c8" stroke="#404040" stroke-width="0.500"/><path d="M2 3h5v6h-5z" fill="#a0a0a0" stroke="#404040" stroke-width="0.500"/><path d="M7 3l3-2v6l-3 2z" fill="#707070" stroke="#404040" stroke-width="0.500"/><path d="M10 3l3-2h5l-3 2z" fill="#ffffff" stroke="#404040" stroke-width="0.500"/><path d="M10 3h5v6h-5z" fill="#f0f0f0" stroke="#404040" stroke-width="0.500"/><path d="M15 3l3-2v6l-3 2z" fill="#d0d0d0" stroke="#404040" stroke-width="0.500"/><path d="M1.2999999999999998 14.5h6.4M4.5 11.3v6.4" stroke="#48d020" stroke-width="2"/><path d="M12 15.5c4 0 5-5 1.500-6l-2 0m1.800-2.200l-2.600 2.400l2.800 2" fill="none" stroke="#2c6cd0" stroke-width="1.500"/></g><g transform="translate(628.00,68.50) scale(1.0)"><path d="M2 3l3-2h5l-3 2z" fill="#c8c8c8" stroke="#404040" stroke-width="0.500"/><path d="M2 3h5v6h-5z" fill="#a0a0a0" stroke="#404040" stroke-width="0.500"/><path d="M7 3l3-2v6l-3 2z" fill="#707070" stroke="#404040" stroke-width="0.500"/><path d="M10 3l3-2h5l-3 2z" fill="#ffffff" stroke="#404040" stroke-width="0.500"/><path d="M10 3h5v6h-5z" fill="#f0f0f0" stroke="#404040" stroke-width="0.500"/><path d="M15 3l3-2v6l-3 2z" fill="#d0d0d0" stroke="#404040" stroke-width="0.500"/><rect x="2.7" y="6.5" width="5.600" height="13.500" rx="1.500" fill="#0c0c0c"/><circle cx="5.5" cy="9.8" r="2.100" fill="#f0d000"/><circle cx="5.5" cy="15.700000000000001" r="2.100" fill="#10c010"/><rect x="12.7" y="6.5" width="5.600" height="13.500" rx="1.500" fill="#0c0c0c"/><circle cx="15.5" cy="9.8" r="2.100" fill="#e01010"/><circle cx="15.5" cy="15.700000000000001" r="2.100" fill="#f0c000"/></g><g transform="translate(654.00,68.50) scale(1.0)"><path d="M2 3l3-2h5l-3 2z" fill="#c8c8c8" stroke="#404040" stroke-width="0.500"/><path d="M2 3h5v6h-5z" fill="#a0a0a0" stroke="#404040" stroke-width="0.500"/><path d="M7 3l3-2v6l-3 2z" fill="#707070" stroke="#404040" stroke-width="0.500"/><path d="M10 3l3-2h5l-3 2z" fill="#ffffff" stroke="#404040" stroke-width="0.500"/><path d="M10 3h5v6h-5z" fill="#f0f0f0" stroke="#404040" stroke-width="0.500"/><path d="M15 3l3-2v6l-3 2z" fill="#d0d0d0" stroke="#404040" stroke-width="0.500"/><path d="M5.0 12.5A5.5 4.4 0 0 1 14.35 9.7" fill="none" stroke="#40b830" stroke-width="2.6"/><path d="M11.6 6.675000000000001l5.225 2.475l-4.125 4.125z" fill="#40b830"/><path d="M16.0 13.5A5.5 4.4 0 0 1 6.65 16.3" fill="none" stroke="#e8d810" stroke-width="2.6"/><path d="M9.4 19.325l-5.225-2.475l4.125-4.125z" fill="#e8d810"/></g><g transform="translate(680.00,68.50) scale(1.0)"><path d="M2 3l3-2h5l-3 2z" fill="#c8c8c8" stroke="#404040" stroke-width="0.500"/><path d="M2 3h5v6h-5z" fill="#a0a0a0" stroke="#404040" stroke-width="0.500"/><path d="M7 3l3-2v6l-3 2z" fill="#707070" stroke="#404040" stroke-width="0.500"/><path d="M10 3l3-2h5l-3 2z" fill="#ffffff" stroke="#404040" stroke-width="0.500"/><path d="M10 3h5v6h-5z" fill="#f0f0f0" stroke="#404040" stroke-width="0.500"/><path d="M15 3l3-2v6l-3 2z" fill="#d0d0d0" stroke="#404040" stroke-width="0.500"/><path d="M1 13h6M4 10v6" stroke="#48d020" stroke-width="2"/><path d="M12 10.500l-5 8" stroke="#202020" stroke-width="1.300"/><path d="M11.0 17h7.0" stroke="#f0e000" stroke-width="2"/></g><g transform="translate(707.00,68.50) scale(1.0)"><ellipse cx="13.0" cy="17.5" rx="6.5" ry="1.600" fill="#808898" opacity="0.55"/><path d="M5 4V16A5.0 2.2 0 0 0 15 16V4" fill="url(#gcb)" stroke="#10183c" stroke-width="1.1"/><ellipse cx="10.0" cy="4" rx="5.0" ry="2.2" fill="#7098d8" stroke="#10183c" stroke-width="1.1"/><path d="M10 6.500v10" stroke="#000" stroke-width="1.200" stroke-dasharray="2.200 1.500"/></g><g transform="translate(733.00,68.50) scale(1.0)"><ellipse cx="13.0" cy="17.5" rx="6.5" ry="1.600" fill="#808898" opacity="0.55"/><path d="M5 4V16A5.0 2.2 0 0 0 15 16V4" fill="url(#gcl)" stroke="#283050" stroke-width="1.1"/><ellipse cx="10.0" cy="4" rx="5.0" ry="2.2" fill="#7098d8" stroke="#283050" stroke-width="1.1"/><path d="M8 6.500v11M11.500 6.500v11" stroke="#e8e020" stroke-width="1.500"/><path d="M6 6v10.500M13.800 6v10.500" stroke="#3858b0" stroke-width="1.300"/></g><g transform="translate(759.00,68.50) scale(1.0)"><ellipse cx="12.0" cy="17.5" rx="6.5" ry="1.600" fill="#808898" opacity="0.55"/><path d="M4 4V16A5.0 2.2 0 0 0 14 16V4" fill="url(#gcl)" stroke="#28dcf0" stroke-width="1.2"/><ellipse cx="9.0" cy="4" rx="5.0" ry="2.2" fill="#e0e8f8" stroke="#28dcf0" stroke-width="1.2"/><path d="M6 10l3.500 5.500l7-9.500" fill="none" stroke="#30b020" stroke-width="2.800" stroke-linejoin="round"/></g><g transform="translate(785.60,68.50) scale(1.0)"><ellipse cx="12.0" cy="17.5" rx="6.5" ry="1.600" fill="#808898" opacity="0.55"/><path d="M4 5V16A5.0 2.2 0 0 0 14 16V5" fill="url(#gcl)" stroke="#28dcf0" stroke-width="1.2"/><ellipse cx="9.0" cy="5" rx="5.0" ry="2.2" fill="#e0e8f8" stroke="#28dcf0" stroke-width="1.2"/><rect x="12" y="1" width="6" height="6" fill="none" stroke="#e08820" stroke-width="1.300"/><rect x="12.500" y="3.500" width="3" height="3" fill="#e05020"/></g><g transform="translate(811.60,68.50) scale(1.0)"><path d="M5.5 4V16A4.5 2.2 0 0 0 14.5 16V4" fill="#dce8fc" stroke="#4888e0" stroke-width="1.0"/><ellipse cx="10.0" cy="4" rx="4.5" ry="2.2" fill="#dce8fc" stroke="#4888e0" stroke-width="1.0"/><path d="M7.500 5.500l1.500 11M9.500 6l2.500 11M12 6l-2.500 11M13.500 5.500l-1 11.500" stroke="#68a0e8" stroke-width="0.600" fill="none"/></g><g transform="translate(837.00,68.50) scale(1.0)"><path d="M1 5l9-3.500l9 3.500l-9 3.500z" fill="#88b0f4" stroke="#0c1c50" stroke-width="0.800"/><path d="M1 5l9 3.500v10c-5-2-8-7-9-13.500z" fill="#3860c0" stroke="#0c1c50" stroke-width="0.800"/><path d="M19 5l-9 3.500v10c5-2 8-7 9-13.500z" fill="#142c78" stroke="#0c1c50" stroke-width="0.800"/></g><g transform="translate(878.00,68.50) scale(1.0)"><path d="M5.5 11.0l-5 5" stroke="#a0a0a0" stroke-width="2.600" stroke-linecap="round"/><path d="M5.5 11.0l-5 5" stroke="#e0e0e0" stroke-width="1.200" stroke-linecap="round"/><circle cx="9" cy="7.5" r="5" fill="url(#glens)" stroke="#8898b0" stroke-width="1.300"/><circle cx="9" cy="7.5" r="3.8" fill="none" stroke="#ffffff" stroke-width="0.600" opacity="0.8"/><g transform="translate(9.5,9.5) scale(0.9)"><path d="M0 3l4-3h6l-4 3z" fill="#a8a8a8" stroke="#303030" stroke-width="0.500"/><path d="M0 3h6v7h-6z" fill="#686868" stroke="#303030" stroke-width="0.500"/><path d="M6 3l4-3v7l-4 3z" fill="#404040" stroke="#303030" stroke-width="0.500"/></g><path d="M0.500 2.500h4M2.500 0.500v4M0.500 7h4" stroke="#000" stroke-width="0.900"/></g><g transform="translate(905.00,68.50) scale(1.0)"><path d="M6.0 11.0l-5 5" stroke="#a0a0a0" stroke-width="2.600" stroke-linecap="round"/><path d="M6.0 11.0l-5 5" stroke="#e0e0e0" stroke-width="1.200" stroke-linecap="round"/><circle cx="9.5" cy="7.5" r="5" fill="url(#glens)" stroke="#8898b0" stroke-width="1.300"/><circle cx="9.5" cy="7.5" r="3.8" fill="none" stroke="#ffffff" stroke-width="0.600" opacity="0.8"/><g transform="translate(9.5,9.5) scale(0.9)"><path d="M0 3l4-3h6l-4 3z" fill="#a8a8a8" stroke="#303030" stroke-width="0.500"/><path d="M0 3h6v7h-6z" fill="#686868" stroke="#303030" stroke-width="0.500"/><path d="M6 3l4-3v7l-4 3z" fill="#404040" stroke="#303030" stroke-width="0.500"/></g><path d="M0.5 0.5l4 4M4.5 0.5l-4 4" stroke="#30b020" stroke-width="1.300"/><rect x="1.5" y="1.5" width="2" height="2" fill="#208010"/><path d="M15.5 0.5l4 4M19.5 0.5l-4 4" stroke="#30b020" stroke-width="1.300"/><rect x="16.5" y="1.5" width="2" height="2" fill="#208010"/><path d="M0.5 15l4 4M4.5 15l-4 4" stroke="#30b020" stroke-width="1.300"/><rect x="1.5" y="16" width="2" height="2" fill="#208010"/><path d="M15.5 15l4 4M19.5 15l-4 4" stroke="#30b020" stroke-width="1.300"/><rect x="16.5" y="16" width="2" height="2" fill="#208010"/></g><g transform="translate(931.00,68.50) scale(1.0)"><rect x="3" y="4.500" width="14" height="11" fill="#e8eeff" stroke="#202020" stroke-width="1.200"/><path d="M6.500 7v6M13.500 7v6M5.500 8l1-1" stroke="#2020a0" stroke-width="1.400"/><circle cx="10" cy="8.500" r="0.900" fill="#2020a0"/><circle cx="10" cy="12" r="0.900" fill="#2020a0"/><path d="M1 1.5l4 4M5 1.5l-4 4" stroke="#30b020" stroke-width="1.300"/><rect x="2" y="2.5" width="2" height="2" fill="#208010"/><path d="M15 1.5l4 4M19 1.5l-4 4" stroke="#30b020" stroke-width="1.300"/><rect x="16" y="2.5" width="2" height="2" fill="#208010"/><path d="M1 14.5l4 4M5 14.5l-4 4" stroke="#30b020" stroke-width="1.300"/><rect x="2" y="15.5" width="2" height="2" fill="#208010"/><path d="M15 14.5l4 4M19 14.5l-4 4" stroke="#30b020" stroke-width="1.300"/><rect x="16" y="15.5" width="2" height="2" fill="#208010"/></g><g transform="translate(957.50,68.50) scale(1.0)"><path d="M5 15l11-11" stroke="#28a828" stroke-width="2.200"/><path d="M18.500 1.500l-7.500 2l5.500 5.500z" fill="#28a828"/><circle cx="4.500" cy="15.500" r="3" fill="url(#gball)" stroke="#606060" stroke-width="0.500"/></g><g transform="translate(983.00,68.50) scale(1.0)"><path d="M4 12c-2-5 2-10 8-9.500" fill="none" stroke="#2c9c2c" stroke-width="2.800"/><path d="M10.500-0.500l5.500 3.200l-5 3.800z" fill="#2c9c2c"/><path d="M16 8c2 5-2 10-8 9.500" fill="none" stroke="#2c9c2c" stroke-width="2.800"/><path d="M9.500 20.500l-5.500-3.200l5-3.800z" fill="#2c9c2c"/></g><g transform="translate(1008.70,68.50) scale(1.0)"><g transform="translate(0,-1)"><path d="M0.500 8.500C4 2 15 1 19.500 7C15.500 4.500 5 5 0.500 8.500Z" fill="#1c2238"/><path d="M2 8.500C6 4 14 4 18 8C14 11.800 6 11.800 2 8.500Z" fill="#8c9cc4" stroke="#2c3454" stroke-width="0.600"/><circle cx="10" cy="7.800" r="3.300" fill="url(#giris)"/><circle cx="10" cy="7.800" r="1.500" fill="#060a1c"/><circle cx="9" cy="6.600" r="0.800" fill="#fff" opacity="0.85"/><path d="M1.800 6.300l-1.500-1.600M4.300 4.300l-1-2M7.500 3.200l-0.400-2.200M11 3l0.300-2.200M14.200 3.600l1.100-2M16.800 5l1.700-1.500" stroke="#1c2238" stroke-width="0.800"/></g><circle cx="11" cy="13.500" r="6" fill="url(#gsmile)" stroke="#c08000" stroke-width="0.500"/><circle cx="9" cy="12" r="0.800" fill="#402000"/><circle cx="13" cy="12" r="0.800" fill="#402000"/><path d="M8 15c2 2 4 2 6 0" fill="none" stroke="#402000" stroke-width="0.800"/></g><g transform="translate(1052.00,68.50) scale(1.0)"><g transform="translate(7,12) scale(1.1)"><path d="M-6 1l7-5l8 3l-6 6z" fill="#dce4f4" stroke="#a8b4d0" stroke-width="0.600"/><path d="M0 0V-8" stroke="#1060e0" stroke-width="1.400"/><path d="M0-10.500l2 3.200h-4z" fill="#1060e0"/><path d="M0 0l6-4.500" stroke="#20a820" stroke-width="1.400"/><path d="M8-6l-3.500 0.800l1.800 2.400z" fill="#20a820"/><path d="M0 0l6 4" stroke="#e01818" stroke-width="1.400"/><path d="M8 5.300l-3.600-0.500l1.700-2.500z" fill="#e01818"/><circle cx="0" cy="0" r="1.500" fill="url(#gball)"/></g></g><g transform="translate(1078.00,68.50) scale(1.0)"><g transform="translate(12,6) scale(0.7)"><path d="M-6 1l7-5l8 3l-6 6z" fill="#dce4f4" stroke="#a8b4d0" stroke-width="0.600"/><path d="M0 0V-8" stroke="#1060e0" stroke-width="1.400"/><path d="M0-10.500l2 3.200h-4z" fill="#1060e0"/><path d="M0 0l6-4.500" stroke="#20a820" stroke-width="1.400"/><path d="M8-6l-3.500 0.800l1.800 2.400z" fill="#20a820"/><path d="M0 0l6 4" stroke="#e01818" stroke-width="1.400"/><path d="M8 5.300l-3.600-0.500l1.700-2.500z" fill="#e01818"/><circle cx="0" cy="0" r="1.500" fill="url(#gball)"/></g><rect x="9" y="13" width="9" height="5" fill="none" stroke="#888" stroke-width="1.300"/><path d="M3 17l8-7" stroke="#28a828" stroke-width="3"/><path d="M13.500 7.500l-6.500 1.500l5 5z" fill="#28a828"/><circle cx="3.500" cy="17" r="2" fill="#909090"/></g><g transform="translate(1104.00,68.50) scale(1.0)"><g transform="translate(13,7) scale(0.7)"><path d="M-6 1l7-5l8 3l-6 6z" fill="#dce4f4" stroke="#a8b4d0" stroke-width="0.600"/><path d="M0 0V-8" stroke="#1060e0" stroke-width="1.400"/><path d="M0-10.500l2 3.200h-4z" fill="#1060e0"/><path d="M0 0l6-4.500" stroke="#20a820" stroke-width="1.400"/><path d="M8-6l-3.500 0.800l1.800 2.400z" fill="#20a820"/><path d="M0 0l6 4" stroke="#e01818" stroke-width="1.400"/><path d="M8 5.300l-3.600-0.500l1.700-2.500z" fill="#e01818"/><circle cx="0" cy="0" r="1.500" fill="url(#gball)"/></g><path d="M2 8l6 6" stroke="#28a828" stroke-width="2.600"/><path d="M0.500 6.500l5.500 0.500l-5 5z" fill="#28a828"/><path d="M9.500 15.500l-5.500-0.500l5-5z" fill="#28a828"/><path d="M3 13l5 5" stroke="#28a828" stroke-width="2.200"/></g><g transform="translate(1147.00,68.50) scale(1.0)"><rect x="0.5" y="0.5" width="6" height="6" fill="#00d0f0"/><rect x="7.0" y="0.5" width="6" height="6" fill="#f0e000"/><rect x="13.5" y="0.5" width="6" height="6" fill="#10e010"/><rect x="0.5" y="7.0" width="6" height="6" fill="#f08000"/><rect x="7.0" y="7.0" width="6" height="6" fill="#a86000"/><rect x="13.5" y="7.0" width="6" height="6" fill="#f000f0"/><rect x="0.5" y="13.5" width="6" height="6" fill="#0000e0"/><rect x="7.0" y="13.5" width="6" height="6" fill="#10a030"/><rect x="13.5" y="13.5" width="6" height="6" fill="#808080"/></g><g transform="translate(1173.00,68.50) scale(1.0)"><rect x="2" y="0.500" width="15.500" height="19" fill="#f4f8ff" stroke="#8090b0" stroke-width="1"/><rect x="3.500" y="2.500" width="12.500" height="1.500" fill="#58a0f0"/><rect x="3.500" y="5" width="12.500" height="1.200" fill="#f0b040"/><rect x="3.500" y="7" width="12.500" height="1" fill="#a0e0a0"/><rect x="4.5" y="9.0" width="3.300" height="2.800" fill="#00d0f0"/><rect x="8.3" y="9.0" width="3.300" height="2.800" fill="#f0e000"/><rect x="12.1" y="9.0" width="3.300" height="2.800" fill="#10e010"/><rect x="4.5" y="12.2" width="3.300" height="2.800" fill="#f08000"/><rect x="8.3" y="12.2" width="3.300" height="2.800" fill="#a86000"/><rect x="12.1" y="12.2" width="3.300" height="2.800" fill="#f000f0"/><rect x="4.5" y="15.4" width="3.300" height="2.800" fill="#0000e0"/><rect x="8.3" y="15.4" width="3.300" height="2.800" fill="#10a030"/><rect x="12.1" y="15.4" width="3.300" height="2.800" fill="#808080"/></g><g transform="translate(1199.00,68.50) scale(1.0)"><circle cx="10" cy="10" r="9.200" fill="#78a048" stroke="#587830" stroke-width="1"/><path d="M5 5l10 10" stroke="#e4e4e4" stroke-width="2.400" stroke-linecap="round"/><circle cx="5" cy="5" r="2.400" fill="#e8e8e8"/><circle cx="4.200" cy="4.200" r="1.200" fill="#78a048"/><path d="M15.500 4l-10 11" stroke="#4080d0" stroke-width="2.400" stroke-linecap="round"/><path d="M14 3l3 3" stroke="#d8d8d8" stroke-width="2"/></g><g transform="translate(1225.00,68.50) scale(1.0)"><rect x="0.500" y="0.500" width="19" height="19" fill="#dcecfc" stroke="#506890" stroke-width="1"/><rect x="0.500" y="0.500" width="19" height="4" fill="#3870c0"/><rect x="3" y="6" width="2" height="2" fill="#c06020"/><rect x="3" y="10" width="2" height="2" fill="#c06020"/><rect x="3" y="14" width="2" height="2" fill="#c06020"/><rect x="7" y="6" width="2" height="2" fill="#a0a020"/><rect x="10.500" y="6" width="2" height="2" fill="#a0a020"/><rect x="14" y="6" width="2" height="2" fill="#a0a020"/><g transform="translate(5,6) scale(0.68)"><path d="M5 5l10 10" stroke="#e4e4e4" stroke-width="2.400" stroke-linecap="round"/><circle cx="5" cy="5" r="2.400" fill="#e8e8e8"/><circle cx="4.200" cy="4.200" r="1.200" fill="#78a048"/><path d="M15.500 4l-10 11" stroke="#4080d0" stroke-width="2.400" stroke-linecap="round"/><path d="M14 3l3 3" stroke="#d8d8d8" stroke-width="2"/></g></g><g transform="translate(1251.00,68.50) scale(1.0)"><rect x="1.0" y="1.0" width="1.600" height="1.600" fill="#203870"/><rect x="1.0" y="5.3" width="1.600" height="1.600" fill="#203870"/><rect x="1.0" y="9.6" width="1.600" height="1.600" fill="#203870"/><rect x="1.0" y="13.9" width="1.600" height="1.600" fill="#203870"/><rect x="1.0" y="18.2" width="1.600" height="1.600" fill="#203870"/><rect x="5.3" y="1.0" width="1.600" height="1.600" fill="#203870"/><rect x="5.3" y="18.2" width="1.600" height="1.600" fill="#203870"/><rect x="9.6" y="1.0" width="1.600" height="1.600" fill="#203870"/><rect x="9.6" y="18.2" width="1.600" height="1.600" fill="#203870"/><rect x="13.9" y="1.0" width="1.600" height="1.600" fill="#203870"/><rect x="13.9" y="18.2" width="1.600" height="1.600" fill="#203870"/><rect x="18.2" y="1.0" width="1.600" height="1.600" fill="#203870"/><rect x="18.2" y="5.3" width="1.600" height="1.600" fill="#203870"/><rect x="18.2" y="9.6" width="1.600" height="1.600" fill="#203870"/><rect x="18.2" y="13.9" width="1.600" height="1.600" fill="#203870"/><rect x="18.2" y="18.2" width="1.600" height="1.600" fill="#203870"/><path d="M5 11c2-5 5-8 9-8c3 0 5 1 5 3c0 2-2 3-4 3l-3 0l-3 4z" fill="#e8b870" stroke="#906020" stroke-width="0.700"/><circle cx="6" cy="14.500" r="3.200" fill="#f0e020" stroke="#b0a000" stroke-width="0.500"/><path d="M3.800 14.500h4.400M6 12.300v4.400" stroke="#2060e0" stroke-width="1.300"/></g><g transform="translate(1277.00,68.50) scale(1.0)"><path d="M6 2.500l13-1.500l-5 14.500l-13.500 2z" fill="#e06868" stroke="#2058d0" stroke-width="1.600"/><path d="M9 2.300l-5 14.700M12.500 1.800l-5 14.600M16 1.500l-5 14.600M5 6h13M3.800 9.800h13M2.500 13.500h12.500" stroke="#f8d0d0" stroke-width="0.700"/><path d="M1 17.500l13-2l2 1.500l-13 2z" fill="#606880" opacity="0.7"/></g></svg>
<svg class="i" style="left:0;top:118px" width="60" height="260" viewBox="0 118 60 260"><g transform="translate(7.50,133.00) scale(1.0)"><path d="M7.15 11.85l-5.5 5.5" stroke="#a0a0a0" stroke-width="2.600" stroke-linecap="round"/><path d="M7.15 11.85l-5.5 5.5" stroke="#e0e0e0" stroke-width="1.200" stroke-linecap="round"/><circle cx="11" cy="8" r="5.5" fill="url(#glens)" stroke="#8898b0" stroke-width="1.300"/><circle cx="11" cy="8" r="4.3" fill="none" stroke="#ffffff" stroke-width="0.600" opacity="0.8"/><path d="M1 6c3-2 5-2 7 0M0 9c3-2 5-1.500 7 0" stroke="#a0a8b8" stroke-width="0.800" fill="none"/></g><g transform="translate(33.50,133.00) scale(1.0)"><path d="M2 4l15 14M1 14l17-4" stroke="#3068e0" stroke-width="1.400"/><path d="M3.0 17.0L6.7 15.7L4.1 13.2Z" fill="#f0d0a0" stroke="#604020" stroke-width="0.400"/><path d="M3.0 17.0L4.4 16.5L3.4 15.6Z" fill="#202020"/><path d="M6.7 15.7L16.6 5.1L14.0 2.6L4.1 13.2Z" fill="#f09020" stroke="#804000" stroke-width="0.400"/><path d="M5.6 14.6L15.5 4.0L14.0 2.6L4.1 13.2Z" fill="#ffc050"/><path d="M16.6 5.1L18.3 3.2L15.7 0.8L14.0 2.6Z" fill="#d02020" stroke="#601010" stroke-width="0.400"/></g><path d="M48.5 132.5h5l-2.500 2.800z" fill="#000"/><g transform="translate(7.50,159.00) scale(1.0)"><rect x="3" y="4" width="14" height="12" fill="url(#gdoc)" stroke="#283050" stroke-width="1"/><path d="M0.5 1.5l4 4M4.5 1.5l-4 4" stroke="#30b020" stroke-width="1.300"/><rect x="1.5" y="2.5" width="2" height="2" fill="#208010"/><path d="M15.5 1.5l4 4M19.5 1.5l-4 4" stroke="#30b020" stroke-width="1.300"/><rect x="16.5" y="2.5" width="2" height="2" fill="#208010"/><path d="M0.5 14.5l4 4M4.5 14.5l-4 4" stroke="#30b020" stroke-width="1.300"/><rect x="1.5" y="15.5" width="2" height="2" fill="#208010"/><path d="M15.5 14.5l4 4M19.5 14.5l-4 4" stroke="#30b020" stroke-width="1.300"/><rect x="16.5" y="15.5" width="2" height="2" fill="#208010"/></g><g transform="translate(33.50,159.00) scale(1.0)"><path d="M3 7c0-5 8-4 6 1c-2 5 2 10 6 9c4-1 3-6-1-6" fill="none" stroke="#3068e0" stroke-width="1.600"/><path d="M4.0 16.0L7.7 14.7L5.1 12.2Z" fill="#f0d0a0" stroke="#604020" stroke-width="0.400"/><path d="M4.0 16.0L5.4 15.5L4.4 14.6Z" fill="#202020"/><path d="M7.7 14.7L16.6 5.1L14.0 2.6L5.1 12.2Z" fill="#f09020" stroke="#804000" stroke-width="0.400"/><path d="M6.6 13.6L15.5 4.0L14.0 2.6L5.1 12.2Z" fill="#ffc050"/><path d="M16.6 5.1L18.3 3.2L15.7 0.8L14.0 2.6Z" fill="#d02020" stroke="#601010" stroke-width="0.400"/></g><path d="M48.5 158.5h5l-2.500 2.800z" fill="#000"/><g transform="translate(7.50,184.50) scale(1.0)"><path d="M6.15 11.85l-5.5 5.5" stroke="#a0a0a0" stroke-width="2.600" stroke-linecap="round"/><path d="M6.15 11.85l-5.5 5.5" stroke="#e0e0e0" stroke-width="1.200" stroke-linecap="round"/><circle cx="10" cy="8" r="5.5" fill="url(#glens)" stroke="#8898b0" stroke-width="1.300"/><circle cx="10" cy="8" r="4.3" fill="none" stroke="#ffffff" stroke-width="0.600" opacity="0.8"/><g transform="translate(10.5,10.5) scale(0.9)"><path d="M0 3l4-3h6l-4 3z" fill="#a8a8a8" stroke="#303030" stroke-width="0.500"/><path d="M0 3h6v7h-6z" fill="#686868" stroke="#303030" stroke-width="0.500"/><path d="M6 3l4-3v7l-4 3z" fill="#404040" stroke="#303030" stroke-width="0.500"/></g><path d="M0.500 2.500h4M2.500 0.500v4M0.500 7h4" stroke="#000" stroke-width="0.900"/></g><path d="M22.5 184.0h5l-2.500 2.800z" fill="#000"/><g transform="translate(33.50,184.50) scale(1.0)"><rect x="2" y="3" width="14" height="14" fill="#fffff0" stroke="#e8e000" stroke-width="1.800"/><path d="M12 14h5v5" fill="none" stroke="#e8e000" stroke-width="1.500"/><path d="M5 10l3.500 5l7-10" fill="none" stroke="#30b020" stroke-width="2.800" stroke-linejoin="round"/></g><path d="M48.5 184.0h5l-2.500 2.800z" fill="#000"/><g transform="translate(7.50,210.50) scale(1.0)"><g transform="translate(8,12) scale(1.15)"><path d="M-6 1l7-5l8 3l-6 6z" fill="#dce4f4" stroke="#a8b4d0" stroke-width="0.600"/><path d="M0 0V-8" stroke="#1060e0" stroke-width="1.400"/><path d="M0-10.500l2 3.200h-4z" fill="#1060e0"/><path d="M0 0l6-4.500" stroke="#20a820" stroke-width="1.400"/><path d="M8-6l-3.500 0.800l1.800 2.400z" fill="#20a820"/><path d="M0 0l6 4" stroke="#e01818" stroke-width="1.400"/><path d="M8 5.300l-3.600-0.500l1.700-2.500z" fill="#e01818"/><circle cx="0" cy="0" r="1.500" fill="url(#gball)"/></g></g><path d="M22.5 210.0h5l-2.500 2.800z" fill="#000"/><g transform="translate(33.50,210.50) scale(1.0)"><path d="M1 14c2-10 6-12 8-4s6 10 9 2" fill="none" stroke="#3068e0" stroke-width="1.600"/><path d="M5.0 17.0L8.6 15.4L5.8 13.1Z" fill="#f0d0a0" stroke="#604020" stroke-width="0.400"/><path d="M5.0 17.0L6.4 16.4L5.3 15.5Z" fill="#202020"/><path d="M8.6 15.4L16.8 5.1L14.0 2.8L5.8 13.1Z" fill="#f09020" stroke="#804000" stroke-width="0.400"/><path d="M7.4 14.5L15.7 4.1L14.0 2.8L5.8 13.1Z" fill="#ffc050"/><path d="M16.8 5.1L18.4 3.1L15.6 0.9L14.0 2.8Z" fill="#d02020" stroke="#601010" stroke-width="0.400"/></g><path d="M48.5 210.0h5l-2.500 2.800z" fill="#000"/><g transform="translate(7.50,236.50) scale(1.0)"><path d="M2 2.500h10l2 1.500h-10z" fill="#7088e0"/><path d="M2 5h10l2 1.500h-10z" fill="#98a8e8"/><path d="M2 7.500h10l2 1.500h-10z" fill="#c0c8f0"/><ellipse cx="10" cy="14.500" rx="7.500" ry="4.500" fill="#c89870" stroke="#705038" stroke-width="0.700"/><circle cx="6.500" cy="15.500" r="1.600" fill="#1830d0"/><circle cx="10.500" cy="16.500" r="1.600" fill="#e02020"/><circle cx="14" cy="14.500" r="1.600" fill="#20b030"/><circle cx="9" cy="12.500" r="1.200" fill="#f0e020"/><path d="M18.500 2l-6.500 9.500" stroke="#a05020" stroke-width="1.600" stroke-linecap="round"/><path d="M12.500 10.500l-1.500 3" stroke="#503018" stroke-width="1.800" stroke-linecap="round"/></g><path d="M22.5 236.0h5l-2.500 2.800z" fill="#000"/><g transform="translate(33.50,236.50) scale(1.0)"><path d="M5 3l14-1.500l-4 14l-14.500 3z" fill="#a8c8f8" stroke="#2860d8" stroke-width="1.500"/><path d="M12 2.300l-4.500 15M3 10.500l14-2" stroke="#f0f6ff" stroke-width="1.300"/></g><path d="M48.5 236.0h5l-2.500 2.800z" fill="#000"/><g transform="translate(7.50,262.50) scale(1.0)"><path d="M3.2 9.5A6.8 5.44 0 0 1 14.76 5.92" fill="none" stroke="#7eaee8" stroke-width="3.4"/><path d="M11.36 2.1800000000000006l6.46 3.06l-5.1 5.1z" fill="#7eaee8"/><path d="M16.8 10.5A6.8 5.44 0 0 1 5.24 14.08" fill="none" stroke="#5c94dc" stroke-width="3.4"/><path d="M8.64 17.82l-6.46-3.06l5.1-5.1z" fill="#5c94dc"/></g><path d="M22.5 262.0h5l-2.500 2.800z" fill="#000"/><g transform="translate(33.50,262.50) scale(1.0)"><path d="M2 6l8-3.500l8 3.500l-8 3.500z" fill="#d0d0d0" stroke="#404040" stroke-width="0.600"/><path d="M2 6l8 3.500v9l-8-3.500z" fill="#909090" stroke="#404040" stroke-width="0.600"/><path d="M18 6l-8 3.500v9l8-3.500z" fill="#585858" stroke="#404040" stroke-width="0.600"/></g><path d="M48.5 262.0h5l-2.500 2.800z" fill="#000"/><g transform="translate(7.50,288.50) scale(1.0)"><ellipse cx="10" cy="18.500" rx="5" ry="1.300" fill="#8090a8" opacity="0.6"/><path d="M5.500 6.500c0-6 10-6 10-0.500c0 4-4.500 4-4.500 7.500" fill="none" stroke="#3868c8" stroke-width="2.800" stroke-linecap="round"/><circle cx="11" cy="16.500" r="1.700" fill="#3868c8"/></g><path d="M22.5 288.0h5l-2.500 2.800z" fill="#000"/><g transform="translate(33.50,288.50) scale(1.0)"><path d="M2 3v16M18 3v16" stroke="#000" stroke-width="1.300"/><path d="M3 7h14" stroke="#e8d800" stroke-width="1.600"/><path d="M2.500 7l3-2v4zM17.500 7l-3-2v4z" fill="#e8d800"/></g><path d="M48.5 288.0h5l-2.500 2.800z" fill="#000"/><g transform="translate(7.50,314.50) scale(1.0)"><path d="M4 5h12l-1.500 13.500h-9z" fill="#b8dcf0" stroke="#5088b0" stroke-width="0.800"/><ellipse cx="10" cy="5" rx="6.200" ry="1.800" fill="#d8ecf8" stroke="#5088b0" stroke-width="0.800"/><path d="M7 9l2 6M12 8l-1 7M9 11l4 2" stroke="#90c040" stroke-width="1"/><path d="M8 2l2 3l2-3z" fill="#404040"/></g><path d="M22.5 314.0h5l-2.500 2.800z" fill="#000"/><g transform="translate(33.50,314.50) scale(1.0)"><g transform="translate(2,2) scale(1.0)"><path d="M1 7l6.500-6v3.500c5 0 8.500 3.500 7.500 9.500c-1-3.500-3.500-5-7.500-5v4z" fill="url(#ggray)" stroke="#9a9a9a" stroke-width="0.600"/></g></g><path d="M48.5 314.0h5l-2.500 2.800z" fill="#000"/><g transform="translate(7.50,340.50) scale(1.0)"><path d="M1 1v14M3.500 1v14" stroke="#404040" stroke-width="1.200"/><circle cx="11" cy="9" r="5.500" fill="none" stroke="#e07010" stroke-width="1.600"/><path d="M11 1v16M3 9h16M5.500 3.500l11 11M16.500 3.500l-11 11" stroke="#e07010" stroke-width="1.100"/><circle cx="11" cy="9" r="1.800" fill="#e07010"/><path d="M1 16l8-2.500l8 2.500l-8 3z" fill="#f09030" stroke="#c05000" stroke-width="0.500"/></g><path d="M22.5 340.0h5l-2.500 2.800z" fill="#000"/><g transform="translate(33.50,340.50) scale(1.0)"><path d="M6 8h8.500l4.0 4.0v7.0h-12.5z" fill="url(#gdoc)" stroke="#000" stroke-width="1.0"/><path d="M14.5 8v4.0h4.0" fill="#fff" stroke="#000" stroke-width="0.7"/><g transform="translate(0,0.5) scale(0.85)"><path d="M0 3h5l1.500 1.500h8.500v10h-15z" fill="#e8b840" stroke="#b08820" stroke-width="0.500"/><path d="M0 15l2.500-8.500h15l-2.500 8.500z" fill="url(#gfold)" stroke="#b88c24" stroke-width="0.500"/></g><path d="M8 4c1-3 5-3.500 7-1l1.500-1.200v4.700h-4.700l1.500-1.500c-1-1.500-3-1.500-4 0z" fill="#30b030"/></g></svg>
<svg class="i" style="left:60px;top:110px" width="320" height="170" viewBox="60 110 320 170"><rect x="64.5" y="113.5" width="23" height="23" fill="#808498" stroke="#8a8ea6" stroke-width="1"/><rect x="92.5" y="113.5" width="23" height="23" fill="#808498" stroke="#8a8ea6" stroke-width="1"/><rect x="120.5" y="113.5" width="23" height="23" fill="#808498" stroke="#8a8ea6" stroke-width="1"/><rect x="148.5" y="113.5" width="23" height="23" fill="#808498" stroke="#8a8ea6" stroke-width="1"/><rect x="176.5" y="113.5" width="23" height="23" fill="#808498" stroke="#8a8ea6" stroke-width="1"/><rect x="204.5" y="113.5" width="23" height="23" fill="#808498" stroke="#8a8ea6" stroke-width="1"/><rect x="232.5" y="113.5" width="23" height="23" fill="#808498" stroke="#8a8ea6" stroke-width="1"/><rect x="260.5" y="113.5" width="23" height="23" fill="#808498" stroke="#8a8ea6" stroke-width="1"/><rect x="288.5" y="113.5" width="23" height="23" fill="#808498" stroke="#8a8ea6" stroke-width="1"/><rect x="316.5" y="113.5" width="23" height="23" fill="#808498" stroke="#8a8ea6" stroke-width="1"/><rect x="344.5" y="113.5" width="23" height="23" fill="#808498" stroke="#8a8ea6" stroke-width="1"/><g transform="translate(64,113)"><rect x="3.500" y="3.800" width="17.500" height="3.400" rx="0.800" fill="#3f5888"/><rect x="3.500" y="10.200" width="17.500" height="3.400" rx="0.800" fill="#3f5888"/><rect x="3.500" y="16.500" width="17.500" height="3.400" rx="0.800" fill="#3f5888"/><path d="M4 5h16.500M4 11.400h16.500M4 17.700h16.500" stroke="#6078a8" stroke-width="0.700"/></g><g transform="translate(94,115)"><rect x="4.700" y="5.700" width="11.300" height="10" fill="url(#gdoc)" stroke="#c8d0e0" stroke-width="0.800"/><path d="M0.5 1.5l4 4M4.5 1.5l-4 4" stroke="#48d030" stroke-width="1.300"/><rect x="1.5" y="2.5" width="2" height="2" fill="#208010"/><path d="M15.5 1.5l4 4M19.5 1.5l-4 4" stroke="#48d030" stroke-width="1.300"/><rect x="16.5" y="2.5" width="2" height="2" fill="#208010"/><path d="M0.5 15.5l4 4M4.5 15.5l-4 4" stroke="#48d030" stroke-width="1.300"/><rect x="1.5" y="16.5" width="2" height="2" fill="#208010"/><path d="M15.5 15.5l4 4M19.5 15.5l-4 4" stroke="#48d030" stroke-width="1.300"/><rect x="16.5" y="16.5" width="2" height="2" fill="#208010"/></g><g transform="translate(122,115)"><path d="M9.65 14.35l-5.5 5.5" stroke="#a0a0a0" stroke-width="2.600" stroke-linecap="round"/><path d="M9.65 14.35l-5.5 5.5" stroke="#e0e0e0" stroke-width="1.200" stroke-linecap="round"/><circle cx="13.5" cy="10.5" r="5.5" fill="url(#glens)" stroke="#8898b0" stroke-width="1.300"/><circle cx="13.5" cy="10.5" r="4.3" fill="none" stroke="#ffffff" stroke-width="0.600" opacity="0.8"/><path d="M3 7c2-2 4-2 5 0M2 10c2-1.500 4-1.500 5.500 0M4 4.500c2-1.500 4-1.500 5.500 0" stroke="#c0c8d8" stroke-width="0.800" fill="none"/></g><g transform="translate(150,115)"><path d="M2 15l8-5l8 4l-8 5z" fill="#9098a8" stroke="#687080" stroke-width="0.500"/><path d="M9 13V4" stroke="#1060e0" stroke-width="1.600"/><path d="M9 0.500l2.500 4.500h-5z" fill="#1060e0"/><path d="M9 13l6-5" stroke="#20c020" stroke-width="1.500"/><path d="M9 13l7 4" stroke="#e01818" stroke-width="1.500"/><path d="M18.500 18.500l-4.200-0.500l1.800-2.800z" fill="#e01818"/><circle cx="9" cy="13" r="1.500" fill="#e8e8e8"/></g><g transform="translate(176,113)"><path d="M12 14L12 3M12 14L3 17M12 14L21 17" stroke="#000" stroke-width="1.100"/><polygon points="3,6.5 12,3 21,6.5 12,10" fill="#38d028"/><polygon points="3,6.5 12,3 21,6.5 21,17 12,21.5 3,17" fill="none" stroke="#000" stroke-width="1.300" stroke-linejoin="round"/><path d="M12 10L3 6.5M12 10L21 6.5M12 10L12 21.5" stroke="#000" stroke-width="1.300"/></g><g transform="translate(204,113)"><polygon points="3,17 12,14 21,17 12,21.5" fill="#38d028"/><path d="M12 14L12 3M12 14L3 17M12 14L21 17" stroke="#000" stroke-width="1.100"/><polygon points="3,6.5 12,3 21,6.5 21,17 12,21.5 3,17" fill="none" stroke="#000" stroke-width="1.300" stroke-linejoin="round"/><path d="M12 10L3 6.5M12 10L21 6.5M12 10L12 21.5" stroke="#000" stroke-width="1.300"/></g><g transform="translate(232,113)"><polygon points="3,6.5 12,3 12,14 3,17" fill="#38d028"/><path d="M12 14L12 3M12 14L3 17M12 14L21 17" stroke="#000" stroke-width="1.100"/><polygon points="3,6.5 12,3 21,6.5 21,17 12,21.5 3,17" fill="none" stroke="#000" stroke-width="1.300" stroke-linejoin="round"/><path d="M12 10L3 6.5M12 10L21 6.5M12 10L12 21.5" stroke="#000" stroke-width="1.300"/></g><g transform="translate(260,113)"><path d="M12 14L12 3M12 14L3 17M12 14L21 17" stroke="#000" stroke-width="1.100"/><polygon points="12,10 21,6.5 21,17 12,21.5" fill="#38d028"/><polygon points="3,6.5 12,3 21,6.5 21,17 12,21.5 3,17" fill="none" stroke="#000" stroke-width="1.300" stroke-linejoin="round"/><path d="M12 10L3 6.5M12 10L21 6.5M12 10L12 21.5" stroke="#000" stroke-width="1.300"/></g><g transform="translate(288,113)"><path d="M12 14L12 3M12 14L3 17M12 14L21 17" stroke="#000" stroke-width="1.100"/><polygon points="3,6.5 12,10 12,21.5 3,17" fill="#38d028"/><polygon points="3,6.5 12,3 21,6.5 21,17 12,21.5 3,17" fill="none" stroke="#000" stroke-width="1.300" stroke-linejoin="round"/><path d="M12 10L3 6.5M12 10L21 6.5M12 10L12 21.5" stroke="#000" stroke-width="1.300"/></g><g transform="translate(316,113)"><polygon points="12,3 21,6.5 21,17 12,14" fill="#38d028"/><path d="M12 14L12 3M12 14L3 17M12 14L21 17" stroke="#000" stroke-width="1.100"/><polygon points="3,6.5 12,3 21,6.5 21,17 12,21.5 3,17" fill="none" stroke="#000" stroke-width="1.300" stroke-linejoin="round"/><path d="M12 10L3 6.5M12 10L21 6.5M12 10L12 21.5" stroke="#000" stroke-width="1.300"/></g><g transform="translate(344,113)"><polygon points="3,6.5 12,3 21,6.5 12,10" fill="#58e048"/><polygon points="3,6.5 12,10 12,21.5 3,17" fill="#30c020"/><polygon points="12,10 21,6.5 21,17 12,21.5" fill="#209410"/><polygon points="3,6.5 12,3 21,6.5 21,17 12,21.5 3,17" fill="none" stroke="#1c7c10" stroke-width="0.800"/></g><rect x="64.5" y="141.5" width="23" height="23" fill="#808498" stroke="#8a8ea6" stroke-width="1"/><rect x="64.5" y="169.5" width="23" height="23" fill="#808498" stroke="#8a8ea6" stroke-width="1"/><rect x="64.5" y="197.5" width="23" height="23" fill="#8d8c86" stroke="#f0c850" stroke-width="1.400"/><rect x="64.5" y="225.5" width="23" height="23" fill="#808498" stroke="#8a8ea6" stroke-width="1"/><rect x="64.5" y="253.5" width="23" height="23" fill="#808498" stroke="#8a8ea6" stroke-width="1"/><g transform="translate(66,143)"><path d="M5.5 4.5V15.5A4.5 2 0 0 0 14.5 15.5V4.5" fill="none" stroke="#101010" stroke-width="0.9"/><path d="M5.5 15.5A4.5 2 0 0 1 14.5 15.5" fill="none" stroke="#101010" stroke-width="0.7200000000000001"/><ellipse cx="10.0" cy="4.5" rx="4.5" ry="2" fill="none" stroke="#101010" stroke-width="0.9"/></g><g transform="translate(66,171)"><path d="M5.5 4.5V15.5A4.5 2 0 0 0 14.5 15.5V4.5" fill="none" stroke="#101010" stroke-width="0.9"/><ellipse cx="10.0" cy="4.5" rx="4.5" ry="2" fill="none" stroke="#101010" stroke-width="0.9"/></g><g transform="translate(66,199)"><ellipse cx="13.0" cy="17.0" rx="6.0" ry="1.600" fill="#808898" opacity="0.55"/><path d="M5.5 4.5V15.5A4.5 2 0 0 0 14.5 15.5V4.5" fill="url(#gcb)" stroke="#10183c" stroke-width="1"/><ellipse cx="10.0" cy="4.5" rx="4.5" ry="2" fill="#7098d8" stroke="#10183c" stroke-width="1"/></g><g transform="translate(66,227)"><ellipse cx="13.0" cy="17.0" rx="6.0" ry="1.600" fill="#808898" opacity="0.55"/><path d="M5.5 4.5V15.5A4.5 2 0 0 0 14.5 15.5V4.5" fill="url(#gcl)" stroke="#586078" stroke-width="0.9"/><ellipse cx="10.0" cy="4.5" rx="4.5" ry="2" fill="#e4e8f4" stroke="#586078" stroke-width="0.9"/></g><g transform="translate(66,255)"><path d="M5.5 4.5V15.5A4.5 2 0 0 0 14.5 15.5V4.5" fill="none" stroke="#101010" stroke-width="0.9"/><path d="M5.5 15.5A4.5 2 0 0 1 14.5 15.5" fill="none" stroke="#101010" stroke-width="0.7200000000000001"/><ellipse cx="10.0" cy="4.5" rx="4.5" ry="2" fill="none" stroke="#101010" stroke-width="0.9"/><path d="M7.500 6l1.500 11M9.500 6.500l2.500 10.500M12 6.500l-2.500 10.500M13.500 6l-1 11" stroke="#181818" stroke-width="0.600" fill="none"/></g></svg>
<svg class="i" style="left:1120px;top:1000px" width="360" height="40" viewBox="1120 1000 360 40"><rect x="1182.500" y="1022.500" width="16" height="16" fill="#e4e8f4" stroke="#6c7090" stroke-width="1"/><g transform="translate(1183.00,1023.00) scale(0.75)"><path d="M4 9.5A6 4.800000000000001 0 0 1 14.2 6.4" fill="none" stroke="#e04858" stroke-width="2.4"/><path d="M11.2 3.1000000000000005l5.699999999999999 2.7l-4.5 4.5z" fill="#e04858"/><path d="M16 10.5A6 4.800000000000001 0 0 1 5.800000000000001 13.6" fill="none" stroke="#4888e0" stroke-width="2.4"/><path d="M8.8 16.9l-5.699999999999999-2.7l4.5-4.5z" fill="#4888e0"/></g><rect x="1212" y="1022" width="18" height="17.500" fill="#ffe680"/><g transform="translate(1212,1022)"><path d="M2 1l9 1l4 7l-9 6l-5-6z" fill="#c060d0"/><path d="M5 2l5 3l-6 4z" fill="#f0d040"/><path d="M8 7l8 9l-3.500 0l1.500 3l-2 0.800l-1.500-3l-2.500 2.200z" fill="#f0f0f0" stroke="#707070" stroke-width="0.700"/></g><g transform="translate(1244,1022)"><rect x="3" y="8" width="11" height="9.500" fill="#e4ecfc" stroke="#7090d0" stroke-width="0.600"/><path d="M6 8v9.500M9 8v9.500M12 8v9.500M3 11h11M3 14h11" stroke="#4878d0" stroke-width="0.700"/><path d="M3 7c2-4 5-6 9-5.500c3 0.300 4 1.500 3.500 3l-5 1l-3 3.500z" fill="#e8b870" stroke="#906020" stroke-width="0.600"/><path d="M4 6l5-3M6 8l5-4" stroke="#b08040" stroke-width="0.500"/></g><g transform="translate(1275,1022) scale(0.82)"><ellipse cx="11" cy="19.500" rx="6" ry="1.400" fill="#8090a8" opacity="0.6"/><path d="M5.500 6.500c0-6 10-6 10-0.500c0 4-4.500 4-4.500 7.500" fill="none" stroke="#3868c8" stroke-width="2.800" stroke-linecap="round"/><circle cx="11" cy="17" r="1.700" fill="#3868c8"/></g><g transform="translate(1304,1022)"><path d="M3 3l4-2h5l-4 2z" fill="#a0c8ff" stroke="#2050c0" stroke-width="0.500"/><rect x="3" y="3" width="5.500" height="5.500" fill="#4888f0" stroke="#2050c0" stroke-width="0.500"/><path d="M8.500 3l3.500-2v5.500l-3.500 2z" fill="#2860d0" stroke="#2050c0" stroke-width="0.500"/><path d="M9 9l4-2h5.500l-4 2z" fill="#b8c8c8" stroke="#203038" stroke-width="0.500"/><rect x="9" y="9" width="6" height="7" fill="#88a0a8" stroke="#203038" stroke-width="0.500"/><path d="M15 9l3.500-2v7l-3.500 2z" fill="#506870" stroke="#203038" stroke-width="0.500"/><path d="M1 11.500h7M5 8.500l3.500 3l-3.500 3" fill="none" stroke="#f01010" stroke-width="1.500"/></g><rect x="1336" y="1022" width="18" height="17.500" fill="#ffe680"/><g transform="translate(1336,1022)"><path d="M2 5l7-3l8 3l-7 3z" fill="#e020e8" stroke="#a010b0" stroke-width="0.400"/><path d="M2 5l8 3v9l-8-3.500z" fill="#88a8a8" stroke="#2868d0" stroke-width="1"/><path d="M17 5l-7 3v9l7-3.500z" fill="#688888" stroke="#2868d0" stroke-width="1"/></g><rect x="1371.500" y="1030" width="9" height="8" fill="none" stroke="#507860" stroke-width="1.200"/><path d="M1431.500 1023v15.500h14.500v-15.500z M1438.500 1023v15.500M1431.500 1030.500h14.500" fill="none" stroke="#485880" stroke-width="1.300"/></svg>
<svg class="i" style="left:60px;top:109px" width="1860" height="892" viewBox="60 109 1860 892" shape-rendering="crispEdges"><defs><linearGradient id="gcyl" x1="0" x2="1" y1="0" y2="0"><stop offset="0" stop-color="#a8e0ae"/><stop offset="0.25" stop-color="#b6efba"/><stop offset="0.55" stop-color="#9ccaa0"/><stop offset="0.85" stop-color="#587458"/><stop offset="1" stop-color="#3f5540"/></linearGradient><linearGradient id="gcrm" x1="0" x2="1" y1="0" y2="0"><stop offset="0" stop-color="#e8e6ae"/><stop offset="0.3" stop-color="#f0eeb6"/><stop offset="0.7" stop-color="#c0be90"/><stop offset="1" stop-color="#6c6a50"/></linearGradient><linearGradient id="gblu" x1="0" x2="1" y1="0" y2="0"><stop offset="0" stop-color="#0478b7"/><stop offset="0.5" stop-color="#0474b0"/><stop offset="0.85" stop-color="#034f7c"/><stop offset="1" stop-color="#022c47"/></linearGradient><linearGradient id="ghole" x1="0" x2="1" y1="0" y2="1"><stop offset="0" stop-color="#4e4d3a"/><stop offset="0.6" stop-color="#6a6950"/><stop offset="1" stop-color="#cfcd9c"/></linearGradient><linearGradient id="ghole2" x1="0" x2="1" y1="1" y2="0"><stop offset="0" stop-color="#8a8868"/><stop offset="0.6" stop-color="#e6e4ae"/><stop offset="1" stop-color="#ffffd0"/></linearGradient><linearGradient id="gbh" x1="0" x2="1" y1="0" y2="1"><stop offset="0" stop-color="#022640"/><stop offset="0.6" stop-color="#023a5c"/><stop offset="1" stop-color="#0468a0"/></linearGradient><linearGradient id="gbh2" x1="0" x2="1" y1="1" y2="0"><stop offset="0" stop-color="#03507c"/><stop offset="0.6" stop-color="#0580c4"/><stop offset="1" stop-color="#20a0e8"/></linearGradient><linearGradient id="gsh" x1="0" x2="1" y1="0" y2="0"><stop offset="0" stop-color="#d8d6a0"/><stop offset="0.4" stop-color="#ffffd0"/><stop offset="1" stop-color="#b0ae80"/></linearGradient><linearGradient id="gsb" x1="0" x2="1" y1="0" y2="0"><stop offset="0" stop-color="#0570b0"/><stop offset="0.4" stop-color="#30b0f0"/><stop offset="1" stop-color="#0468a0"/></linearGradient><radialGradient id="gdot" cx="0.5" cy="0.3" r="0.7"><stop offset="0" stop-color="#012034"/><stop offset="1" stop-color="#03476e"/></radialGradient></defs><polygon points="1221.5,446.0 1395.5,398.3 1395.5,436.5 1221.5,492.0" fill="#5d5c03" stroke="#000" stroke-width="1" /><line x1="1221.5" y1="472.5" x2="1395.5" y2="416.6" stroke="#000" stroke-width="1"/><polygon points="1221.5,492.0 1395.5,436.5 1395.5,600.3 1221.5,656.2" fill="#5a5944" stroke="#000" stroke-width="1" /><polygon points="1221.5,656.2 1395.5,600.3 1395.5,735.4 1221.5,790.4" fill="#022c47" stroke="#000" stroke-width="1" /><polygon points="1221.5,790.4 1395.5,735.4 1395.5,887.8 1221.5,943.7" fill="#5d5c03" stroke="#000" stroke-width="1" /><polygon points="1221.5,943.7 1244.6,945.5 1417.7,889.6 1395.5,887.8" fill="#c9c800" stroke="#000" stroke-width="1" /><polygon points="1244.6,945.5 1417.7,889.6 1417.7,911.8 1244.6,967.7" fill="#5d5c03" stroke="#000" stroke-width="1" /><polygon points="1244.6,423.7 1418.5,368.2 1418.5,391.2 1244.6,446.2" fill="#5d5c03" stroke="#000" stroke-width="1" /><polygon points="802.5,420.0 1221.5,443.0 1221.5,492.0 802.5,471.6" fill="#f0ee05" /><line x1="802.5" y1="471.6" x2="1221.5" y2="492.0" stroke="#000" stroke-width="1"/><line x1="802.5" y1="451.6" x2="1221.5" y2="472.5" stroke="#000" stroke-width="1"/><polygon points="802.5,471.6 1221.5,492.0 1221.5,656.2 802.5,634.0" fill="#eeedb4" stroke="#000" stroke-width="1" /><polygon points="802.5,634.0 1221.5,656.2 1221.5,790.4 802.5,769.4" fill="#0478b7" stroke="#000" stroke-width="1" /><polygon points="888.0,773.7 1135.5,786.1 1135.5,940.0 888.0,927.0" fill="#5d5c03" /><polygon points="974.7,778.0 1000.0,779.3 1000.0,890.0 969.0,890.0" fill="#d0ffd2" stroke="#000" stroke-width="1" /><polygon points="931.5,775.9 938.5,776.2 938.5,882.0 931.5,882.0" fill="#f0ee05" stroke="#000" stroke-width="0.8" /><polygon points="891.3,892.3 931.0,879.5 975.0,874.0 1060.0,842.0 1135.5,838.0 1135.5,905.9 1100.0,904.7" fill="#b85e03" stroke="#000" stroke-width="0.8" /><polygon points="1129.0,785.8 1135.5,786.1 1135.5,900.0 1129.0,900.0" fill="#0478b7" /><ellipse cx="997.5" cy="889.5" rx="8.0" ry="1.6" fill="#c81414" stroke="#5a1000" stroke-width="0.6" /><ellipse cx="1069.0" cy="893.0" rx="8.0" ry="1.5" fill="#c81414" stroke="#5a1000" stroke-width="0.6" /><path d="M1106.0 784.1L1115.0 784.6V852.0A4.5 1 0 0 1 1106.0 852.0Z" fill="url(#gcyl)" stroke="#000" stroke-width="0.8"/><path d="M1072.5 782.4L1078.0 782.7V866.0A2.8 1 0 0 1 1072.5 866.0Z" fill="url(#gcyl)" stroke="#000" stroke-width="0.8"/><path d="M1077.5 782.7L1081.0 782.9V880.0A1.8 1 0 0 1 1077.5 880.0Z" fill="url(#gcrm)" stroke="#000" stroke-width="0.8"/><path d="M910.0 774.3L924.7 775.0V889.5A7.4 2 0 0 1 910.0 889.5Z" fill="url(#gcrm)" stroke="#000" stroke-width="0.8"/><path d="M938.5 775.7L957.3 776.7V884.0A9.4 2 0 0 1 938.5 884.0Z" fill="url(#gblu)" stroke="#000" stroke-width="0.8"/><path d="M1055.5 781.6L1073.0 782.5V884.0A8.8 2.5 0 0 1 1055.5 884.0Z" fill="url(#gcyl)" stroke="#000" stroke-width="0.8"/><path d="M987.5 778.2L1015.8 779.6V883.5A14.1 3 0 0 1 987.5 883.5Z" fill="url(#gcyl)" stroke="#000" stroke-width="0.8"/><path d="M1080.5 782.8L1110.3 784.3V886.0A14.9 3 0 0 1 1080.5 886.0Z" fill="url(#gcyl)" stroke="#000" stroke-width="0.8"/><path d="M1015.8 779.6L1055.9 781.6V889.5A20.1 4 0 0 1 1015.8 889.5Z" fill="url(#gcyl)" stroke="#000" stroke-width="0.8"/><path d="M1115.0 784.6L1130.0 785.3V900.0A7.5 2 0 0 1 1115.0 900.0Z" fill="url(#gcrm)" stroke="#000" stroke-width="0.8"/><path d="M951.5 870.5V889A12.25 2.5 0 0 0 976 889V870.5Z" fill="url(#gcrm)" stroke="#000" stroke-width="0.8"/><ellipse cx="963.75" cy="870.5" rx="12.25" ry="2.2" fill="#e6e4b0" stroke="#000" stroke-width="0.8"/><ellipse cx="963.75" cy="870.2" rx="5.5" ry="1.1" fill="#111"/><path d="M1081.5 877V895.5A12.5 2.5 0 0 0 1106.5 895.5V877Z" fill="url(#gcrm)" stroke="#000" stroke-width="0.8"/><ellipse cx="1094.0" cy="877" rx="12.5" ry="2.2" fill="#e6e4b0" stroke="#000" stroke-width="0.8"/><ellipse cx="1094.0" cy="876.7" rx="5.6" ry="1.1" fill="#111"/><polygon points="891.3,892.3 1134.5,905.9 1134.5,920.0 891.3,907.9" fill="#f07c05" stroke="#000" stroke-width="1" /><polygon points="891.3,907.9 1134.5,920.0 1134.5,937.8 891.3,926.0" fill="#eeedb4" stroke="#000" stroke-width="1" /><polygon points="1131.5,905.7 1135.5,905.9 1135.5,920.0 1131.5,919.8" fill="#8a4200" stroke="#000" stroke-width="0.6" /><polygon points="1131.5,919.8 1135.5,920.0 1135.5,937.8 1131.5,937.5" fill="#8c8a68" stroke="#000" stroke-width="0.6" /><polygon points="969.0,910.5 984.0,911.0 982.0,913.5 972.0,913.0" fill="#d8d6a4" stroke="#333" stroke-width="0.5" /><polygon points="1039.0,914.5 1054.0,915.0 1053.0,917.5 1042.0,917.0" fill="#d8d6a4" stroke="#333" stroke-width="0.5" /><polygon points="888.0,926.5 1135.5,937.8 1135.5,940.3 888.0,927.8" fill="#c9c800" /><polygon points="886.8,773.6 888.6,773.7 888.6,891.0 891.3,892.3 891.3,927.0 886.8,927.0" fill="#000" /><polygon points="888.6,891.0 891.3,892.3 891.3,926.5 888.6,926.5" fill="#4a4a02" /><line x1="802.5" y1="769.4" x2="1221.5" y2="790.4" stroke="#ff30e0" stroke-width="1.2"/><polygon points="802.5,769.9 886.5,774.1 886.5,926.8 802.5,922.6" fill="#f0ee05" stroke="#000" stroke-width="1" /><polygon points="1135.5,786.6 1221.5,790.9 1221.5,943.7 1135.5,939.5" fill="#f0ee05" stroke="#000" stroke-width="1" /><polygon points="778.6,921.6 802.5,915.0 802.5,922.6" fill="#c9c800" stroke="#000" stroke-width="1" /><polygon points="778.6,921.6 1244.6,945.5 1244.6,967.7 778.6,944.1" fill="#f0ee05" stroke="#000" stroke-width="1" /><line x1="802.5" y1="922.6" x2="886.5" y2="926.8" stroke="#000" stroke-width="1"/><line x1="1135.5" y1="939.5" x2="1221.5" y2="943.7" stroke="#000" stroke-width="1"/><polygon points="779.5,400.6 951.3,345.1 1418.5,368.2 1244.6,423.7" fill="#b9b800" stroke="#000" stroke-width="1" /><polygon points="779.5,400.6 1244.6,423.7 1244.6,446.2 1221.5,445.5 802.5,422.6 779.5,422.6" fill="#f0ee05" /><polyline points="802.5,422.6 779.5,422.6 779.5,400.6 1244.6,423.7 1244.6,446.2 1221.5,445.5" fill="none" stroke="#000" stroke-width="1"/><line x1="1221.5" y1="445.5" x2="1221.5" y2="943.7" stroke="#000" stroke-width="1"/><line x1="802.5" y1="422.6" x2="802.5" y2="922.6" stroke="#000" stroke-width="1"/><line x1="1395.5" y1="398.3" x2="1395.5" y2="887.8" stroke="#000" stroke-width="1"/><ellipse cx="1004.5" cy="352.2" rx="21.0" ry="2.9" fill="#c9c89c" stroke="#555" stroke-width="0.7" /><ellipse cx="858.1" cy="399.2" rx="21.7" ry="3.2" fill="#c9c89c" stroke="#555" stroke-width="0.7" /><ellipse cx="1341.0" cy="368.7" rx="21.7" ry="3.1" fill="#c9c89c" stroke="#555" stroke-width="0.7" /><ellipse cx="1193.5" cy="416.6" rx="21.6" ry="3.1" fill="#c9c89c" stroke="#555" stroke-width="0.7" /><ellipse cx="1038.3" cy="365.5" rx="8.5" ry="1.5" fill="#e4e200" stroke="#000" stroke-width="0.9" /><ellipse cx="1067.9" cy="356.0" rx="8.0" ry="1.8" fill="#e4e200" stroke="#000" stroke-width="0.9" /><ellipse cx="955.6" cy="392.5" rx="9.0" ry="1.5" fill="#e4e200" stroke="#000" stroke-width="0.9" /><ellipse cx="911.4" cy="397.4" rx="7.5" ry="1.5" fill="#e4e200" stroke="#000" stroke-width="0.9" /><ellipse cx="925.0" cy="402.4" rx="8.5" ry="1.5" fill="#e4e200" stroke="#000" stroke-width="0.9" /><ellipse cx="1048.9" cy="400.5" rx="8.5" ry="1.6" fill="#e4e200" stroke="#000" stroke-width="0.9" /><ellipse cx="1149.3" cy="367.8" rx="8.0" ry="1.8" fill="#e4e200" stroke="#000" stroke-width="0.9" /><ellipse cx="1273.0" cy="366.4" rx="8.5" ry="1.5" fill="#e4e200" stroke="#000" stroke-width="0.9" /><ellipse cx="1242.9" cy="376.5" rx="8.5" ry="1.5" fill="#e4e200" stroke="#000" stroke-width="0.9" /><ellipse cx="1160.0" cy="402.8" rx="8.5" ry="1.7" fill="#e4e200" stroke="#000" stroke-width="0.9" /><ellipse cx="1163.5" cy="410.4" rx="7.5" ry="1.5" fill="#e4e200" stroke="#000" stroke-width="0.9" /><ellipse cx="1130.2" cy="412.5" rx="8.5" ry="1.5" fill="#e4e200" stroke="#000" stroke-width="0.9" /><rect x="1027.7" y="357.1" width="14" height="1.6" fill="#000"/><rect x="1030.8" y="391.6" width="6" height="2" fill="#000"/><rect x="1049.8" y="392.5" width="6" height="2" fill="#000"/><rect x="1071.4" y="390.3" width="10" height="1.2" fill="#000"/><rect x="1077.9" y="394.8" width="6" height="1" fill="#000"/><rect x="1144.0" y="376.6" width="6" height="2" fill="#000"/><rect x="1278.5" y="369.8" width="15" height="2" fill="#000"/><rect x="1100.0" y="388.0" width="6" height="1" fill="#000"/><rect x="1115.5" y="389.5" width="5" height="1" fill="#000"/><ellipse cx="1099.0" cy="382.8" rx="41.5" ry="7.8" fill="#3c0a78" stroke="#14002c" stroke-width="1" /><ellipse cx="1101.0" cy="382.5" rx="30.0" ry="4.8" fill="#4c109a" stroke="#1c0040" stroke-width="0.8" /><ellipse cx="1102.0" cy="383.0" rx="18.0" ry="2.5" fill="#2c0660" stroke="#100024" stroke-width="0.6" /><g shape-rendering="geometricPrecision"><clipPath id="hc1"><circle cx="1012.6" cy="564.1" r="14.600000000000001"/></clipPath><circle cx="1011.5" cy="563.5" r="16.6" fill="#c8c69a" stroke="#000" stroke-width="0.9"/><circle cx="1012.6" cy="564.1" r="14.600000000000001" fill="url(#ghole)" stroke="#000" stroke-width="0.8"/><circle cx="1022.7" cy="560.5" r="13.000000000000002" fill="url(#ghole2)" stroke="#000" stroke-width="0.8" clip-path="url(#hc1)"/><circle cx="1012.6" cy="564.1" r="14.600000000000001" fill="none" stroke="#000" stroke-width="0.8"/><clipPath id="hc2"><circle cx="1012.6" cy="726.1" r="14.600000000000001"/></clipPath><circle cx="1011.5" cy="725.5" r="16.6" fill="#0570ac" stroke="#000" stroke-width="0.9"/><circle cx="1012.6" cy="726.1" r="14.600000000000001" fill="url(#gbh)" stroke="#000" stroke-width="0.8"/><circle cx="1022.7" cy="722.5" r="13.000000000000002" fill="url(#gbh2)" stroke="#000" stroke-width="0.8" clip-path="url(#hc2)"/><circle cx="1012.6" cy="726.1" r="14.600000000000001" fill="none" stroke="#000" stroke-width="0.8"/><ellipse cx="1308.5" cy="546.2" rx="6.2" ry="17.2" fill="#8a8868" stroke="#000" stroke-width="0.9" /><ellipse cx="1307.7" cy="545.5" rx="4.6" ry="14.8" fill="url(#gsh)" stroke="#000" stroke-width="0.6" /><ellipse cx="1308.0" cy="708.3" rx="6.2" ry="17.0" fill="#034a74" stroke="#000" stroke-width="0.9" /><ellipse cx="1307.2" cy="707.8" rx="4.6" ry="14.6" fill="url(#gsb)" stroke="#000" stroke-width="0.6" /><ellipse cx="1291.0" cy="721.0" rx="1.7" ry="4.2" fill="#1590d8" stroke="#011a2c" stroke-width="0.6" /><ellipse cx="1303.0" cy="739.3" rx="1.7" ry="4.2" fill="#1590d8" stroke="#011a2c" stroke-width="0.6" /><ellipse cx="1319.5" cy="712.0" rx="1.7" ry="4.2" fill="#1590d8" stroke="#011a2c" stroke-width="0.6" /><ellipse cx="1332.5" cy="707.6" rx="1.7" ry="4.2" fill="#1590d8" stroke="#011a2c" stroke-width="0.6" /><ellipse cx="1292.5" cy="489.7" rx="1.4" ry="3.0" fill="#d8d6a8" stroke="#111" stroke-width="0.6" /><ellipse cx="1304.4" cy="486.0" rx="1.4" ry="3.0" fill="#d8d6a8" stroke="#111" stroke-width="0.6" /><ellipse cx="1315.5" cy="482.0" rx="1.4" ry="3.0" fill="#d8d6a8" stroke="#111" stroke-width="0.6" /><ellipse cx="1326.5" cy="478.5" rx="1.4" ry="3.0" fill="#d8d6a8" stroke="#111" stroke-width="0.6" /><ellipse cx="931.2" cy="656.9" rx="6.2" ry="6.2" fill="url(#gdot)" stroke="#01121e" stroke-width="0.8" /><ellipse cx="952.8" cy="657.9" rx="6.2" ry="6.2" fill="url(#gdot)" stroke="#01121e" stroke-width="0.8" /><ellipse cx="942.0" cy="649.4" rx="6.2" ry="6.2" fill="url(#gdot)" stroke="#01121e" stroke-width="0.8" /><ellipse cx="942.0" cy="664.9" rx="6.2" ry="6.2" fill="url(#gdot)" stroke="#01121e" stroke-width="0.8" /><circle cx="942.8" cy="649.1" r="3.4" fill="none" stroke="#011a2a" stroke-width="0.9"/><path d="M945.0 646.9a2.6 2.6 0 1 0 0.5 4.3" fill="#0568a0" stroke="#011a2a" stroke-width="0.6"/><circle cx="942.8" cy="664.6" r="3.4" fill="none" stroke="#011a2a" stroke-width="0.9"/><path d="M945.0 662.4a2.6 2.6 0 1 0 0.5 4.3" fill="#0568a0" stroke="#011a2a" stroke-width="0.6"/><ellipse cx="1070.8" cy="663.7" rx="6.2" ry="6.2" fill="url(#gdot)" stroke="#01121e" stroke-width="0.8" /><ellipse cx="1092.4" cy="664.7" rx="6.2" ry="6.2" fill="url(#gdot)" stroke="#01121e" stroke-width="0.8" /><ellipse cx="1081.6" cy="656.2" rx="6.2" ry="6.2" fill="url(#gdot)" stroke="#01121e" stroke-width="0.8" /><ellipse cx="1081.6" cy="671.7" rx="6.2" ry="6.2" fill="url(#gdot)" stroke="#01121e" stroke-width="0.8" /><circle cx="1082.4" cy="655.9" r="3.4" fill="none" stroke="#011a2a" stroke-width="0.9"/><path d="M1084.6 653.7a2.6 2.6 0 1 0 0.5 4.3" fill="#0568a0" stroke="#011a2a" stroke-width="0.6"/><circle cx="1082.4" cy="671.4" r="3.4" fill="none" stroke="#011a2a" stroke-width="0.9"/><path d="M1084.6 669.2a2.6 2.6 0 1 0 0.5 4.3" fill="#0568a0" stroke="#011a2a" stroke-width="0.6"/><polygon points="1272.5,640.2 1329.0,622.0 1329.0,650.0 1272.5,674.8" fill="#663000" stroke="#000" stroke-width="1" /><polygon points="1272.5,645.0 1276.0,644.0 1276.0,668.0 1272.5,674.8" fill="#5a5a5a" stroke="#000" stroke-width="0.6" /><polygon points="1277.0,664.0 1288.0,659.0 1288.0,668.0 1277.0,672.5" fill="#0478b7" /><polygon points="1279.0,660.0 1288.0,656.0 1288.0,663.0 1279.0,667.0" fill="#f08010" /><polygon points="1330.5,620.8 1342.0,617.0 1342.0,623.0 1330.5,623.5" fill="#0a80c8" /><polygon points="1338.0,624.0 1342.0,622.8 1342.0,641.0 1338.0,641.0" fill="#5a5a5a" stroke="#000" stroke-width="0.6" /><polygon points="1329.0,624.0 1338.0,624.0 1338.0,634.5 1329.0,634.5" fill="#f4f4f4" stroke="#000" stroke-width="0.7" /><polygon points="1301.0,648.0 1341.3,636.7 1341.3,675.7 1301.0,688.0" fill="#5c5c5c" stroke="#000" stroke-width="0.8" /><polygon points="1321.0,640.0 1334.0,636.5 1334.0,639.5 1331.5,640.2 1331.5,647.0 1327.5,648.0 1327.5,641.8 1321.0,643.6" fill="#f4f4f4" stroke="#000" stroke-width="0.6" /><polygon points="1288.0,649.0 1321.0,640.0 1327.5,641.8 1301.0,648.8" fill="#dcdcdc" stroke="#000" stroke-width="0.7" /><polygon points="1288.0,649.0 1301.0,648.8 1301.0,688.0 1288.0,688.0" fill="#ececec" stroke="#000" stroke-width="0.8" /><ellipse cx="1305.5" cy="654.5" rx="1.3" ry="2.8" fill="#e8e8e8" stroke="#111" stroke-width="0.6" /><ellipse cx="1317.5" cy="651.0" rx="1.3" ry="2.8" fill="#e8e8e8" stroke="#111" stroke-width="0.6" /><ellipse cx="1324.5" cy="648.7" rx="1.3" ry="2.8" fill="#e8e8e8" stroke="#111" stroke-width="0.6" /><ellipse cx="1336.5" cy="644.5" rx="1.3" ry="2.8" fill="#e8e8e8" stroke="#111" stroke-width="0.6" /><ellipse cx="1305.5" cy="678.0" rx="1.3" ry="2.8" fill="#e8e8e8" stroke="#111" stroke-width="0.6" /><ellipse cx="1315.5" cy="675.0" rx="1.3" ry="2.8" fill="#e8e8e8" stroke="#111" stroke-width="0.6" /><ellipse cx="1326.5" cy="671.5" rx="1.3" ry="2.8" fill="#e8e8e8" stroke="#111" stroke-width="0.6" /><ellipse cx="1336.5" cy="668.5" rx="1.3" ry="2.8" fill="#e8e8e8" stroke="#111" stroke-width="0.6" /><ellipse cx="1279.5" cy="654.0" rx="1.2" ry="2.0" fill="#e08020" stroke="#401800" stroke-width="0.5" /><ellipse cx="1306.0" cy="640.0" rx="1.2" ry="2.0" fill="#e08020" stroke="#401800" stroke-width="0.5" /><ellipse cx="1321.5" cy="635.0" rx="1.2" ry="2.0" fill="#e08020" stroke="#401800" stroke-width="0.5" /><g><rect x="96.500" y="915.5" width="23.5" height="25.5" fill="rgba(200,205,220,0.28)" stroke="#d8d8d8" stroke-width="1"/><path d="M110.5 941V919.5h9.5" fill="none" stroke="#d8d8d8" stroke-width="1"/><line x1="120.200" y1="940" x2="120.200" y2="876" stroke="#00dcdc" stroke-width="2.4"/><path d="M120.200 868l4.200 10h-8.400z" fill="#00e6e6"/><line x1="88" y1="943.5" x2="101" y2="943.5" stroke="#f0e000" stroke-width="1.4"/><line x1="120" y1="941.200" x2="96" y2="941.200" stroke="#f01010" stroke-width="2.2"/><path d="M86.500 940.6l10-4v7z" fill="#e81010"/><line x1="120" y1="942" x2="106" y2="947" stroke="#00a000" stroke-width="2.6"/><circle cx="105" cy="947.2" r="3.6" fill="#00a400"/><circle cx="120.500" cy="941.6" r="3.7" fill="#606060"/><circle cx="119.700" cy="940.6" r="1.4" fill="#9a9a9a"/><path d="M76.500 935.500l7.500 8.500M84 935.500l-7.500 8.500" stroke="#e81010" stroke-width="1.1" fill="none"/><path d="M95.500 944.500l3 4.500l3-4.500M98.500 949v4.500" stroke="#e0e0e0" stroke-width="1.1" fill="none"/><path d="M116.500 856.500h6.500l-6.500 8.500h6.800" stroke="#e0e0e0" stroke-width="1.1" fill="none"/></g></g></svg>
<div style="position:absolute;left:1341px;top:1003px;width:131px;height:16px;background:#ffffff;"></div>
<svg class="i" style="left:1336px;top:1004px" width="4" height="15" shape-rendering="crispEdges"><rect x="0" y="0" width="1" height="1" fill="#9aa0b4"/><rect x="2" y="2" width="1" height="1" fill="#9aa0b4"/><rect x="0" y="4" width="1" height="1" fill="#9aa0b4"/><rect x="2" y="6" width="1" height="1" fill="#9aa0b4"/><rect x="0" y="8" width="1" height="1" fill="#9aa0b4"/><rect x="2" y="10" width="1" height="1" fill="#9aa0b4"/><rect x="0" y="12" width="1" height="1" fill="#9aa0b4"/><rect x="2" y="14" width="1" height="1" fill="#9aa0b4"/></svg>
<svg class="i" style="left:1475px;top:1004px" width="4" height="15" shape-rendering="crispEdges"><rect x="0" y="0" width="1" height="1" fill="#9aa0b4"/><rect x="2" y="2" width="1" height="1" fill="#9aa0b4"/><rect x="0" y="4" width="1" height="1" fill="#9aa0b4"/><rect x="2" y="6" width="1" height="1" fill="#9aa0b4"/><rect x="0" y="8" width="1" height="1" fill="#9aa0b4"/><rect x="2" y="10" width="1" height="1" fill="#9aa0b4"/><rect x="0" y="12" width="1" height="1" fill="#9aa0b4"/><rect x="2" y="14" width="1" height="1" fill="#9aa0b4"/></svg>
<svg class="i" style="left:1658px;top:1004px" width="4" height="15" shape-rendering="crispEdges"><rect x="0" y="0" width="1" height="1" fill="#9aa0b4"/><rect x="2" y="2" width="1" height="1" fill="#9aa0b4"/><rect x="0" y="4" width="1" height="1" fill="#9aa0b4"/><rect x="2" y="6" width="1" height="1" fill="#9aa0b4"/><rect x="0" y="8" width="1" height="1" fill="#9aa0b4"/><rect x="2" y="10" width="1" height="1" fill="#9aa0b4"/><rect x="0" y="12" width="1" height="1" fill="#9aa0b4"/><rect x="2" y="14" width="1" height="1" fill="#9aa0b4"/></svg>
<svg class="i" style="left:1459px;top:1003px" width="14" height="16" viewBox="0 0 14 16"><circle cx="8.500" cy="6" r="3.6" fill="#eef4ff" stroke="#3a6cc0" stroke-width="1.2"/><path d="M5.800 8.800L2 12.600" stroke="#2a54a8" stroke-width="1.600" stroke-linecap="round"/></svg>
<svg class="t" aria-label="绝对" style="left:1486px;top:1004.5px;" width="26.0" height="15.6" viewBox="0 0 26.0 15.6"><text x="0" y="10.56" font-size="12" fill="#000">绝对</text></svg>
<span class="l" style="left:1513.5px;top:1005.5px;font-size:12.5px;color:#000;">XY</span>
<svg class="t" aria-label="上视图" style="left:1533px;top:1004.5px;" width="38.0" height="15.6" viewBox="0 0 38.0 15.6"><text x="0" y="10.56" font-size="12" fill="#000">上视图</text></svg>
<div style="position:absolute;left:1592px;top:1003px;width:1px;height:16px;background:#9a9aa0;"></div>
<svg class="t" aria-label="绝对视图" style="left:1601px;top:1004.5px;" width="50.0" height="15.6" viewBox="0 0 50.0 15.6"><text x="0" y="10.56" font-size="12" fill="#000">绝对视图</text></svg>
<span class="l" style="left:1668.5px;top:1005.5px;font-size:12px;color:#000;font-weight:bold;letter-spacing:-0.1px;">LAYER0</span>
<div style="position:absolute;left:1726px;top:1003px;width:1px;height:16px;background:#9a9aa0;"></div>
<div style="position:absolute;left:1757px;top:1003px;width:1px;height:16px;background:#9a9aa0;"></div>
<div style="position:absolute;left:1800px;top:1003px;width:1px;height:16px;background:#9a9aa0;"></div>
<div style="position:absolute;left:1843px;top:1003px;width:1px;height:16px;background:#9a9aa0;"></div>
<div style="position:absolute;left:1887px;top:1003px;width:1px;height:16px;background:#9a9aa0;"></div>
<div style="position:absolute;left:1762px;top:1005px;width:32px;height:12px;background:#46648c;"></div>
<div style="position:absolute;left:1805px;top:1005px;width:32px;height:12px;background:#46648c;"></div>
<div style="position:absolute;left:1848px;top:1005px;width:32px;height:12px;background:#46648c;"></div>
<svg class="i" style="left:1893px;top:1003px" width="15" height="15" viewBox="0 0 15 15"><circle cx="7.500" cy="7.500" r="6.500" fill="#1840c0" stroke="#0a1c60" stroke-width="0.800"/><path d="M3 4.500c2-2 4-1 4 1s-2 2-1 4-2 2-3-1zM9 3c2 0 3 1 3 3s-2 1-2 3-1 2-2 0 1-3 0-4z" fill="#20c030"/><circle cx="5.500" cy="4.500" r="1.500" fill="#fff" opacity="0.5"/></svg>
<div style="position:absolute;left:1132px;top:1023px;width:1px;height:15px;background:#9a9aa0;"></div>
<div style="position:absolute;left:1175px;top:1023px;width:1px;height:15px;background:#9a9aa0;"></div>
<div style="position:absolute;left:1206px;top:1023px;width:1px;height:15px;background:#9a9aa0;"></div>
<div style="position:absolute;left:1237px;top:1023px;width:1px;height:15px;background:#9a9aa0;"></div>
<div style="position:absolute;left:1268px;top:1023px;width:1px;height:15px;background:#9a9aa0;"></div>
<div style="position:absolute;left:1299px;top:1023px;width:1px;height:15px;background:#9a9aa0;"></div>
<div style="position:absolute;left:1330px;top:1023px;width:1px;height:15px;background:#9a9aa0;"></div>
<div style="position:absolute;left:1361px;top:1023px;width:1px;height:15px;background:#9a9aa0;"></div>
<div style="position:absolute;left:1454px;top:1023px;width:1px;height:15px;background:#9a9aa0;"></div>
<div style="position:absolute;left:1580px;top:1023px;width:1px;height:15px;background:#9a9aa0;"></div>
<div style="position:absolute;left:1654px;top:1023px;width:1px;height:15px;background:#9a9aa0;"></div>
<svg class="t" aria-label="拴牢" style="left:1141px;top:1025px;" width="26.0" height="15.6" viewBox="0 0 26.0 15.6"><text x="0" y="10.56" font-size="12" fill="#000">拴牢</text></svg>
<span class="l" style="left:1463px;top:1026px;font-size:12px;color:#000;letter-spacing:-0.06px;">LS: 1.00 PS: 1.00</span>
<svg class="t" aria-label="单位:" style="left:1589px;top:1025px;" width="29.3" height="15.6" viewBox="0 0 29.3 15.6"><text x="0" y="10.56" font-size="12" fill="#000">单位:</text></svg>
<svg class="t" aria-label="毫米" style="left:1619.5px;top:1025px;" width="26.0" height="15.6" viewBox="0 0 26.0 15.6"><text x="0" y="10.56" font-size="12" fill="#000">毫米</text></svg>
<span class="l" style="left:1663px;top:1026px;font-size:12px;color:#f01414;letter-spacing:0.45px;">X =-0784.577</span>
<span class="l" style="left:1745.5px;top:1026px;font-size:12px;color:#000;letter-spacing:0.39px;">Y = 2333.223 Z = 0000.000</span>
<svg class="i" style="left:1340px;top:955px" width="140" height="90" viewBox="0 0 1630 1048"><ellipse cx="770" cy="965" rx="175" ry="28" fill="#b87848" opacity="0.85"/><ellipse cx="745" cy="945" rx="30" ry="24" fill="#ffee55" stroke="#a8601c" stroke-width="7"/><ellipse cx="860" cy="935" rx="30" ry="24" fill="#ffee55" stroke="#a8601c" stroke-width="7"/><ellipse cx="590" cy="768" rx="52" ry="30" transform="rotate(-25 590 768)" fill="#ffee55" stroke="#a8601c" stroke-width="7"/><ellipse cx="955" cy="765" rx="55" ry="30" transform="rotate(22 955 765)" fill="#ffee55" stroke="#a8601c" stroke-width="7"/><ellipse cx="800" cy="840" rx="125" ry="112" fill="#ffee55" stroke="#a8601c" stroke-width="7"/><path d="M765 225C760 190 745 170 725 150" fill="none" stroke="#8a4a20" stroke-width="14" stroke-linecap="round"/><ellipse cx="708" cy="140" rx="34" ry="26" transform="rotate(30 708 140)" fill="#8a4a20"/><ellipse cx="805" cy="170" rx="17" ry="36" transform="rotate(-8 805 170)" fill="#8a4a20"/><circle cx="585" cy="265" r="75" fill="#c8843c" stroke="#a8601c" stroke-width="8"/><circle cx="593" cy="275" r="36" fill="#f4b898"/><circle cx="965" cy="265" r="75" fill="#c8843c" stroke="#a8601c" stroke-width="8"/><circle cx="957" cy="275" r="36" fill="#f4b898"/><ellipse cx="772" cy="490" rx="312" ry="278" fill="#c8843c" stroke="#a8601c" stroke-width="8"/><path d="M610 735C700 790 850 790 930 735" fill="none" stroke="#b87030" stroke-width="40" stroke-linecap="round"/><ellipse cx="770" cy="535" rx="245" ry="215" fill="#fff259" stroke="#a8601c" stroke-width="8"/><ellipse cx="592" cy="520" rx="44" ry="32" fill="#ffa028" opacity="0.85"/><ellipse cx="948" cy="518" rx="44" ry="32" fill="#ffa028" opacity="0.85"/><circle cx="648" cy="452" r="18" fill="#5a2c10"/><circle cx="893" cy="447" r="18" fill="#5a2c10"/><ellipse cx="770" cy="495" rx="18" ry="10" fill="#c06030"/><path d="M835 775L735 870" stroke="#b06a2c" stroke-width="16"/><path d="M775 740l12 22l24 4l-18 17l4 24l-22-12l-22 12l4-24l-18-17l24-4z" fill="#fff259" stroke="#c89020" stroke-width="4"/><circle cx="600" cy="798" r="26" fill="#c8843c" stroke="#a8601c" stroke-width="6"/><circle cx="715" cy="802" r="26" fill="#c8843c" stroke="#a8601c" stroke-width="6"/><ellipse cx="652" cy="862" rx="88" ry="72" fill="#c8843c" stroke="#a8601c" stroke-width="7"/><circle cx="625" cy="850" r="7" fill="#3a1c08"/><circle cx="688" cy="852" r="7" fill="#3a1c08"/><circle cx="608" cy="856" r="13" fill="#ff80c8"/><circle cx="698" cy="866" r="13" fill="#ff80c8"/><ellipse cx="640" cy="940" rx="22" ry="16" fill="#c8843c" stroke="#a8601c" stroke-width="5"/><ellipse cx="700" cy="945" rx="22" ry="16" fill="#c8843c" stroke="#a8601c" stroke-width="5"/><circle cx="320" cy="588" r="97" fill="#8c5c4c"/><path d="M272 640L320 530L368 640M290 605H350" fill="none" stroke="#fff" stroke-width="20" stroke-linejoin="round" stroke-linecap="round"/><circle cx="400" cy="830" r="97" fill="#8c5c4c"/><path d="M365 780l-40 28l22 32l22-12v62h62v-62l22 12l22-32l-40-28c-10 20-62 20-72 0z" fill="#fff"/><g transform="translate(1232,300) rotate(-6)"><path d="M-95-85L-52 85L0-25L52 85L95-85" fill="none" stroke="#a06830" stroke-width="92" stroke-linejoin="round" stroke-linecap="round"/><path d="M-95-85L-52 85L0-25L52 85L95-85" fill="none" stroke="#ffffff" stroke-width="74" stroke-linejoin="round" stroke-linecap="round"/><circle cx="-95" cy="-60" r="16" fill="#d8a060"/><circle cx="-60" cy="30" r="16" fill="#d8a060"/><circle cx="-10" cy="-20" r="14" fill="#d8a060"/><circle cx="40" cy="60" r="16" fill="#d8a060"/><circle cx="80" cy="-40" r="16" fill="#d8a060"/><circle cx="10" cy="75" r="12" fill="#d8a060"/></g><circle cx="1152" cy="440" r="42" fill="#d8a870" stroke="#a06830" stroke-width="8"/><circle cx="1328" cy="448" r="42" fill="#d8a870" stroke="#a06830" stroke-width="8"/><path fill-rule="evenodd" d="M1240 410a112 130 0 1 0 0.100 0zM1232 490a38 52 0 1 1 -0.100 0z" fill="#d8a870" stroke="#a06830" stroke-width="8"/><circle cx="1155" cy="445" r="20" fill="#e8b8a0"/><circle cx="1325" cy="452" r="20" fill="#e8b8a0"/><g transform="translate(1252,790) rotate(-10) scale(1.02)"><path d="M-95-85L-52 85L0-25L52 85L95-85" fill="none" stroke="#c89020" stroke-width="92" stroke-linejoin="round" stroke-linecap="round"/><path d="M-95-85L-52 85L0-25L52 85L95-85" fill="none" stroke="#fff259" stroke-width="74" stroke-linejoin="round" stroke-linecap="round"/></g></svg>
</body></html>
